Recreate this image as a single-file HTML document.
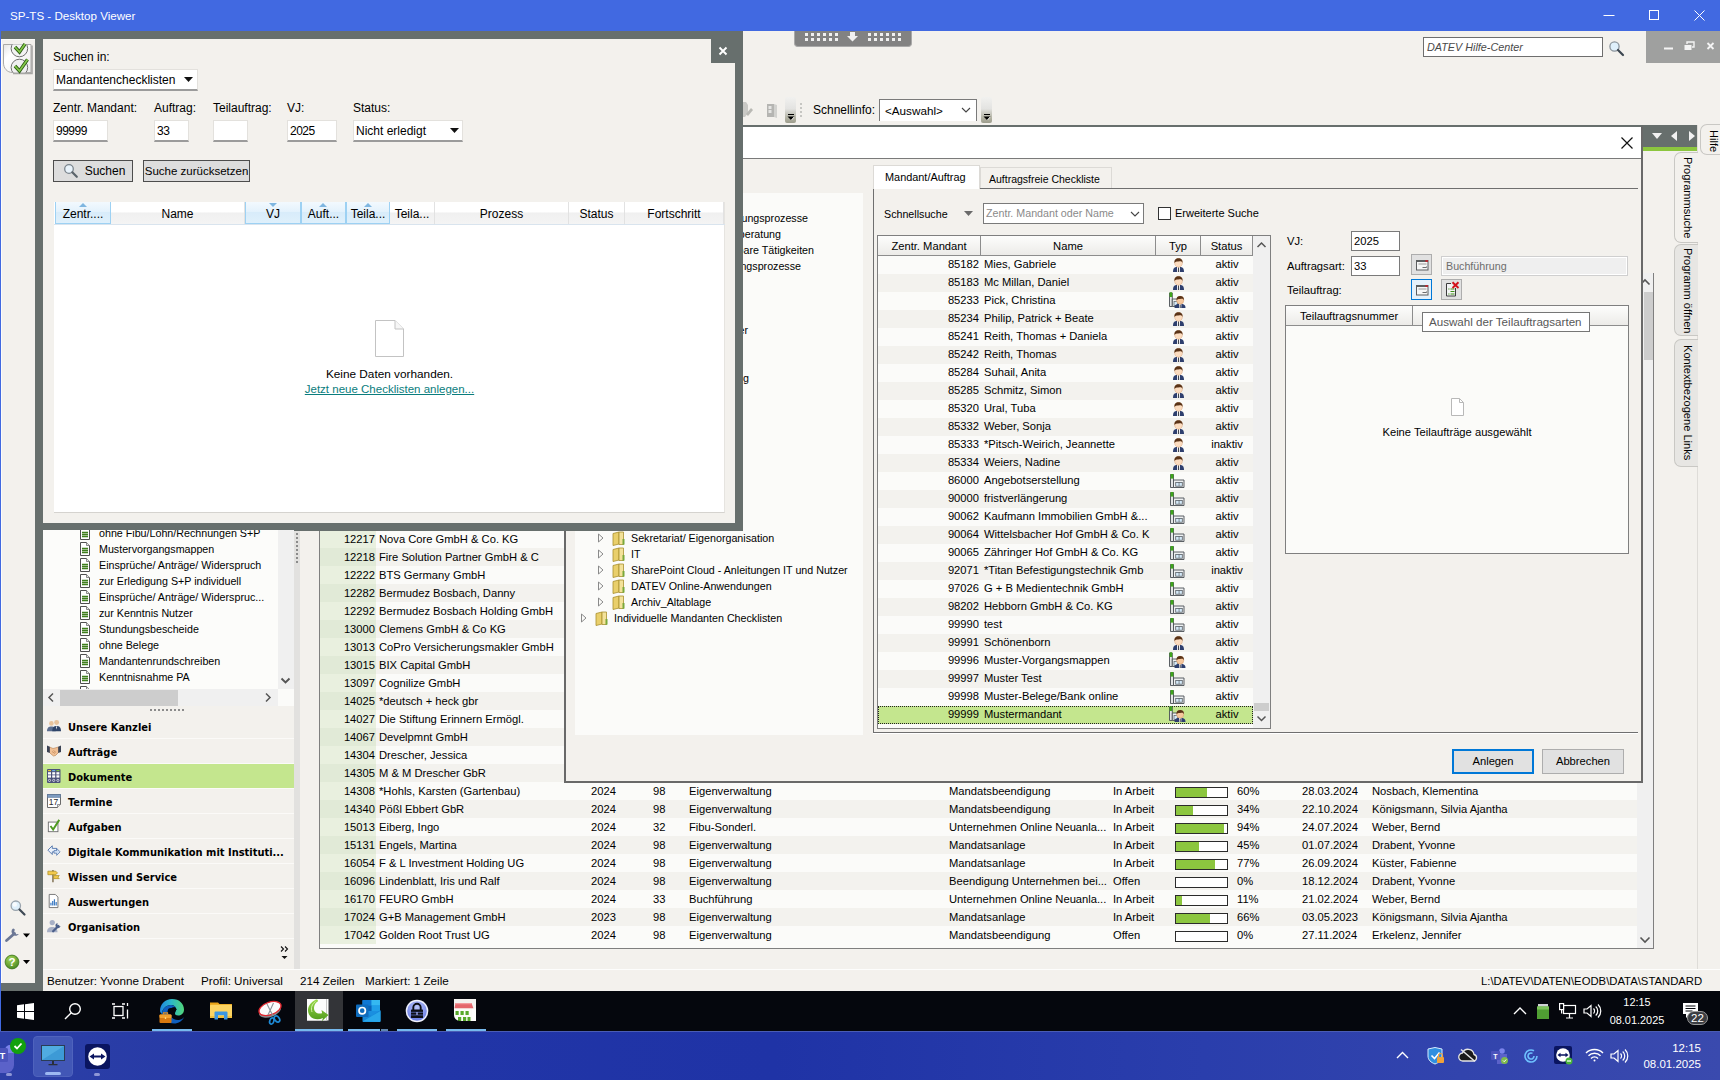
<!DOCTYPE html>
<html lang="de"><head><meta charset="utf-8"><title>SP-TS - Desktop Viewer</title>
<style>
*{box-sizing:border-box;margin:0;padding:0}
html,body{width:1720px;height:1080px;overflow:hidden;background:#f3f1ed}
body{position:relative;font-family:"Liberation Sans",sans-serif;font-size:12px;color:#000;line-height:1}
.a{position:absolute}
.t{position:absolute;white-space:pre;line-height:16px;height:16px}
.ms{font-size:11.2px}
.dk{background:#676f6d}
svg{position:absolute;overflow:visible}
/* title bar */
#tb{left:0;top:0;width:1720px;height:31px;background:#4169e1}
/* search panel */
.inp{position:absolute;background:#fff;border:1px solid #e3e1dd;border-bottom:2px solid #9b9b9b;height:22px;font-size:12px;line-height:20px;padding-left:2px;white-space:pre}
.btn{position:absolute;background:#dddddd;border:1px solid #4d4d4d;height:22px;line-height:21px;text-align:center;white-space:pre}
.hc{position:absolute;top:202px;height:22px;line-height:24px;text-align:center;white-space:pre;border-right:1px solid #e2e2e2;background:linear-gradient(#fff 0,#fff 45%,#f0f0f0 50%,#f4f4f4 100%);font-size:12px}
.hs{background:linear-gradient(#f2f9fe 0,#e4f2fc 45%,#d8ecfa 50%,#dff0fb 100%);border:1px solid #9dd1f3;border-top:0}
/* nav */
.nv{position:absolute;left:43px;width:251px;height:25px;border-bottom:1px solid #fbfaf8;font-family:"DejaVu Sans Condensed","DejaVu Sans","Liberation Sans",sans-serif;font-weight:700;font-size:11px;line-height:28px;padding-left:25px;white-space:pre}
/* tree */
.tr{position:absolute;left:99px;font-size:10.7px;line-height:16px;height:16px;white-space:pre}
/* bg table */
.r{position:absolute;left:320px;width:1317px;height:18px;font-size:11.2px;line-height:18px;white-space:pre}
.r span{position:absolute;top:0;line-height:18px}
.r0{background:#fbfbf9}.r1{background:#f3f2ee}
.g0{background:#e9f0df}.g1{background:#e1ead7}
.r .pb{position:absolute;left:855px;top:5px;width:53px;height:11px;border:1px solid #2b2b2b;background:#fff}
.pb i{position:absolute;left:0;top:0;height:9px;background:#8cc63f}
/* dialog grid */
.d{position:absolute;left:878px;width:375px;height:18px;font-size:11.2px;line-height:18px;white-space:pre}
.d span{position:absolute;top:0;line-height:16px}
</style></head>
<body>
<div class="a" id="tb"></div>
<div class="t" style="left:10px;top:8px;color:#fff;font-size:11.6px">SP-TS - Desktop Viewer</div>
<svg style="left:1590px;top:0" width="130" height="31" viewBox="0 0 130 31" fill="none" stroke="#fff" stroke-width="1">
<path d="M13.5 15.5h11"/><rect x="59.5" y="10.5" width="9" height="9"/><path d="M104.5 10.5l10 10M114.5 10.5l-10 10"/></svg>
<div class="a" style="left:0;top:31px;width:1px;height:1000px;background:#4169e1"></div>
<div class="a" style="left:794px;top:31px;width:118px;height:16px;background:#828282;border:1px solid #a9a9a9;border-top:0;border-radius:0 0 4px 4px"></div>
<svg style="left:794px;top:31px" width="118" height="16" fill="#f0f0f0"><rect x="11" y="2" width="3" height="3"/><rect x="11" y="7" width="3" height="3"/><rect x="17" y="2" width="3" height="3"/><rect x="17" y="7" width="3" height="3"/><rect x="23" y="2" width="3" height="3"/><rect x="23" y="7" width="3" height="3"/><rect x="29" y="2" width="3" height="3"/><rect x="29" y="7" width="3" height="3"/><rect x="35" y="2" width="3" height="3"/><rect x="35" y="7" width="3" height="3"/><rect x="41" y="2" width="3" height="3"/><rect x="41" y="7" width="3" height="3"/><rect x="74" y="2" width="3" height="3"/><rect x="74" y="7" width="3" height="3"/><rect x="80" y="2" width="3" height="3"/><rect x="80" y="7" width="3" height="3"/><rect x="86" y="2" width="3" height="3"/><rect x="86" y="7" width="3" height="3"/><rect x="92" y="2" width="3" height="3"/><rect x="92" y="7" width="3" height="3"/><rect x="98" y="2" width="3" height="3"/><rect x="98" y="7" width="3" height="3"/><rect x="104" y="2" width="3" height="3"/><rect x="104" y="7" width="3" height="3"/><path d="M56 1h5v4h3l-5.5 5.5L53 5h3z"/></svg>
<div class="a" style="left:1423px;top:37px;width:180px;height:20px;background:#fff;border:1px solid #6e6e6e"></div>
<div class="t" style="left:1427px;top:39px;font-style:italic;color:#4a4a4a;font-size:10.8px">DATEV Hilfe-Center</div>
<svg style="left:1608px;top:40px" width="18" height="18" viewBox="0 0 18 18"><circle cx="6.5" cy="6.5" r="4.6" fill="#dff0fb" stroke="#8a949c" stroke-width="1.3"/><path d="M10 10l5 5" stroke="#3c4650" stroke-width="2.2" stroke-linecap="round"/></svg>
<div class="a" style="left:1646px;top:31px;width:74px;height:32px;background:#9fa09f"></div>
<svg style="left:1646px;top:31px" width="74" height="32" viewBox="0 0 74 32" fill="none" stroke="#f4f4f4">
<path d="M18 17.5h9" stroke-width="2"/><rect x="38.5" y="14" width="7" height="5" fill="#f4f4f4" stroke="none"/><path d="M41 13v-2h7v5h-2" stroke-width="1.4"/><path d="M61.5 12l6 6M67.500 12l-6 6" stroke-width="1.8"/></svg>
<svg style="left:743px;top:98px" width="60" height="26" viewBox="0 0 60 26">
<path d="M0 4h3l2 3v8l-3 4H0z" fill="#c9c9c5"/><path d="M3 16l5-6 2 2-5 6z" fill="#b9b9b4"/>
<rect x="24" y="6" width="7" height="13" fill="#b5b5b2"/><path d="M31 6l3 1v13l-3-1z" fill="#d2d2cf"/><rect x="25.500" y="8" width="3" height="3" fill="#e6e6e4"/><rect x="25.500" y="12" width="3" height="3" fill="#e6e6e4"/>
</svg>
<div class="a" style="left:785px;top:97px;width:11px;height:26px;border-radius:2px;background:linear-gradient(#f1f1ef 0,#e3e3e1 45%,#b3b3a4 80%,#9c9c8c 100%)"></div>
<svg style="left:785px;top:97px" width="11" height="26"><path d="M3 17.500h6" stroke="#000" stroke-width="1"/><path d="M2.500 19.500h7l-3.500 3.500z" fill="#000"/><path d="M9 20l-2.500 3" stroke="#fff" stroke-width=".8"/></svg>
<div class="a" style="left:981px;top:97px;width:11px;height:26px;border-radius:2px;background:linear-gradient(#f1f1ef 0,#e3e3e1 45%,#b3b3a4 80%,#9c9c8c 100%)"></div>
<svg style="left:981px;top:97px" width="11" height="26"><path d="M3 17.500h6" stroke="#000" stroke-width="1"/><path d="M2.500 19.500h7l-3.500 3.500z" fill="#000"/><path d="M9 20l-2.500 3" stroke="#fff" stroke-width=".8"/></svg>
<div class="a" style="left:800px;top:103px;width:2px;height:15px;background:repeating-linear-gradient(#c6c6c2 0 2px,transparent 2px 4px)"></div>
<div class="t" style="left:813px;top:102px;font-size:12px">Schnellinfo:</div>
<div class="a" style="left:879px;top:99px;width:98px;height:22px;background:#fff;border:1px solid #7a7a7a;border-bottom:0"></div>
<div class="t" style="left:885px;top:103px;font-size:11.7px">&lt;Auswahl&gt;</div>
<svg style="left:961px;top:107px" width="10" height="7" fill="none" stroke="#444" stroke-width="1.1"><path d="M1 1l4 4 4-4"/></svg>
<div class="a dk" style="left:743px;top:125px;width:954px;height:22px"></div>
<div class="a" style="left:743px;top:147px;width:954px;height:4px;background:#8cc63f"></div>
<svg style="left:1643px;top:125px" width="54" height="22" fill="#f1f1f1"><path d="M9 8h10l-5 6z"/><path d="M34 6v10l-6-5z"/><path d="M46 6v10l6-5z"/></svg>
<div class="a" style="left:1697px;top:125px;width:1px;height:844px;background:#dedcd8"></div>
<div class="a" style="left:1700px;top:124px;width:22px;height:31px;background:#f3f1ed;border:1px solid #c9c8c4;border-right:0;border-radius:7px 0 0 7px"></div>
<div class="a" style="left:1700px;top:126px;width:22px;height:31px;writing-mode:vertical-rl;text-align:center;line-height:16px;font-size:11.1px;white-space:pre">Hilfe</div>
<div class="a" style="left:1674px;top:152px;width:24px;height:91px;background:#f3f1ed;border:1px solid #c9c8c4;border-right:0;border-radius:7px 0 0 7px"></div>
<div class="a" style="left:1674px;top:152px;width:24px;height:91px;writing-mode:vertical-rl;text-align:center;line-height:20px;font-size:11.1px;white-space:pre">Programmsuche</div>
<div class="a" style="left:1674px;top:244px;width:24px;height:92px;background:#e7e6e3;border:1px solid #c9c8c4;border-right:0;border-radius:7px 0 0 7px"></div>
<div class="a" style="left:1674px;top:245px;width:24px;height:92px;writing-mode:vertical-rl;text-align:center;line-height:20px;font-size:11.1px;white-space:pre">Programm öffnen</div>
<div class="a" style="left:1674px;top:339px;width:24px;height:128px;background:#e7e6e3;border:1px solid #c9c8c4;border-right:0;border-radius:7px 0 0 7px"></div>
<div class="a" style="left:1674px;top:339px;width:24px;height:128px;writing-mode:vertical-rl;text-align:center;line-height:20px;font-size:11.1px;white-space:pre">Kontextbezogene Links</div>
<div class="a" style="left:294px;top:530px;width:6px;height:439px;background:#e2e1df"></div>
<div class="a" style="left:296px;top:533px;width:2px;height:30px;background:repeating-linear-gradient(#8b8b8b 0 2px,transparent 2px 4px)"></div>
<div class="a" style="left:319px;top:273px;width:1335px;height:676px;border:1px solid #7f7f7f;background:#fbfbf9"></div>
<div class="r r0" style="top:530px"><span class="g0" style="left:0;width:56px;height:18px"></span><span style="left:0;width:55px;text-align:right">12217</span><span style="left:59px">Nova Core GmbH &amp; Co. KG</span></div>
<div class="r r1" style="top:548px"><span class="g1" style="left:0;width:56px;height:18px"></span><span style="left:0;width:55px;text-align:right">12218</span><span style="left:59px">Fire Solution Partner GmbH &amp; C</span></div>
<div class="r r0" style="top:566px"><span class="g0" style="left:0;width:56px;height:18px"></span><span style="left:0;width:55px;text-align:right">12222</span><span style="left:59px">BTS Germany GmbH</span></div>
<div class="r r1" style="top:584px"><span class="g1" style="left:0;width:56px;height:18px"></span><span style="left:0;width:55px;text-align:right">12282</span><span style="left:59px">Bermudez Bosbach, Danny</span></div>
<div class="r r0" style="top:602px"><span class="g0" style="left:0;width:56px;height:18px"></span><span style="left:0;width:55px;text-align:right">12292</span><span style="left:59px">Bermudez Bosbach Holding GmbH</span></div>
<div class="r r1" style="top:620px"><span class="g1" style="left:0;width:56px;height:18px"></span><span style="left:0;width:55px;text-align:right">13000</span><span style="left:59px">Clemens GmbH &amp; Co KG</span></div>
<div class="r r0" style="top:638px"><span class="g0" style="left:0;width:56px;height:18px"></span><span style="left:0;width:55px;text-align:right">13013</span><span style="left:59px">CoPro Versicherungsmakler GmbH</span></div>
<div class="r r1" style="top:656px"><span class="g1" style="left:0;width:56px;height:18px"></span><span style="left:0;width:55px;text-align:right">13015</span><span style="left:59px">BIX Capital GmbH</span></div>
<div class="r r0" style="top:674px"><span class="g0" style="left:0;width:56px;height:18px"></span><span style="left:0;width:55px;text-align:right">13097</span><span style="left:59px">Cognilize GmbH</span></div>
<div class="r r1" style="top:692px"><span class="g1" style="left:0;width:56px;height:18px"></span><span style="left:0;width:55px;text-align:right">14025</span><span style="left:59px">*deutsch + heck gbr</span></div>
<div class="r r0" style="top:710px"><span class="g0" style="left:0;width:56px;height:18px"></span><span style="left:0;width:55px;text-align:right">14027</span><span style="left:59px">Die Stiftung Erinnern Ermögl.</span></div>
<div class="r r1" style="top:728px"><span class="g1" style="left:0;width:56px;height:18px"></span><span style="left:0;width:55px;text-align:right">14067</span><span style="left:59px">Develpmnt GmbH</span></div>
<div class="r r0" style="top:746px"><span class="g0" style="left:0;width:56px;height:18px"></span><span style="left:0;width:55px;text-align:right">14304</span><span style="left:59px">Drescher, Jessica</span></div>
<div class="r r1" style="top:764px"><span class="g1" style="left:0;width:56px;height:18px"></span><span style="left:0;width:55px;text-align:right">14305</span><span style="left:59px">M &amp; M Drescher GbR</span></div>
<div class="r r0" style="top:782px"><span class="g0" style="left:0;width:56px;height:18px"></span><span style="left:0;width:55px;text-align:right">14308</span><span style="left:59px">*Hohls, Karsten (Gartenbau)</span><span style="left:271px">2024</span><span style="left:333px">98</span><span style="left:369px">Eigenverwaltung</span><span style="left:629px">Mandatsbeendigung</span><span style="left:793px">In Arbeit</span><span class="pb"><i style="width:31px"></i></span><span style="left:917px">60%</span><span style="left:982px">28.03.2024</span><span style="left:1052px">Nosbach, Klementina</span></div>
<div class="r r1" style="top:800px"><span class="g1" style="left:0;width:56px;height:18px"></span><span style="left:0;width:55px;text-align:right">14340</span><span style="left:59px">Pößl Ebbert GbR</span><span style="left:271px">2024</span><span style="left:333px">98</span><span style="left:369px">Eigenverwaltung</span><span style="left:629px">Mandatsbeendigung</span><span style="left:793px">In Arbeit</span><span class="pb"><i style="width:17px"></i></span><span style="left:917px">34%</span><span style="left:982px">22.10.2024</span><span style="left:1052px">Königsmann, Silvia Ajantha</span></div>
<div class="r r0" style="top:818px"><span class="g0" style="left:0;width:56px;height:18px"></span><span style="left:0;width:55px;text-align:right">15013</span><span style="left:59px">Eiberg, Ingo</span><span style="left:271px">2024</span><span style="left:333px">32</span><span style="left:369px">Fibu-Sonderl.</span><span style="left:629px">Unternehmen Online Neuanla...</span><span style="left:793px">In Arbeit</span><span class="pb"><i style="width:48px"></i></span><span style="left:917px">94%</span><span style="left:982px">24.07.2024</span><span style="left:1052px">Weber, Bernd</span></div>
<div class="r r1" style="top:836px"><span class="g1" style="left:0;width:56px;height:18px"></span><span style="left:0;width:55px;text-align:right">15131</span><span style="left:59px">Engels, Martina</span><span style="left:271px">2024</span><span style="left:333px">98</span><span style="left:369px">Eigenverwaltung</span><span style="left:629px">Mandatsanlage</span><span style="left:793px">In Arbeit</span><span class="pb"><i style="width:23px"></i></span><span style="left:917px">45%</span><span style="left:982px">01.07.2024</span><span style="left:1052px">Drabent, Yvonne</span></div>
<div class="r r0" style="top:854px"><span class="g0" style="left:0;width:56px;height:18px"></span><span style="left:0;width:55px;text-align:right">16054</span><span style="left:59px">F &amp; L Investment Holding UG</span><span style="left:271px">2024</span><span style="left:333px">98</span><span style="left:369px">Eigenverwaltung</span><span style="left:629px">Mandatsanlage</span><span style="left:793px">In Arbeit</span><span class="pb"><i style="width:39px"></i></span><span style="left:917px">77%</span><span style="left:982px">26.09.2024</span><span style="left:1052px">Küster, Fabienne</span></div>
<div class="r r1" style="top:872px"><span class="g1" style="left:0;width:56px;height:18px"></span><span style="left:0;width:55px;text-align:right">16096</span><span style="left:59px">Lindenblatt, Iris und Ralf</span><span style="left:271px">2024</span><span style="left:333px">98</span><span style="left:369px">Eigenverwaltung</span><span style="left:629px">Beendigung Unternehmen bei...</span><span style="left:793px">Offen</span><span class="pb"></span><span style="left:917px">0%</span><span style="left:982px">18.12.2024</span><span style="left:1052px">Drabent, Yvonne</span></div>
<div class="r r0" style="top:890px"><span class="g0" style="left:0;width:56px;height:18px"></span><span style="left:0;width:55px;text-align:right">16170</span><span style="left:59px">FEURO GmbH</span><span style="left:271px">2024</span><span style="left:333px">33</span><span style="left:369px">Buchführung</span><span style="left:629px">Unternehmen Online Neuanla...</span><span style="left:793px">In Arbeit</span><span class="pb"><i style="width:6px"></i></span><span style="left:917px">11%</span><span style="left:982px">21.02.2024</span><span style="left:1052px">Weber, Bernd</span></div>
<div class="r r1" style="top:908px"><span class="g1" style="left:0;width:56px;height:18px"></span><span style="left:0;width:55px;text-align:right">17024</span><span style="left:59px">G+B Management GmbH</span><span style="left:271px">2023</span><span style="left:333px">98</span><span style="left:369px">Eigenverwaltung</span><span style="left:629px">Mandatsanlage</span><span style="left:793px">In Arbeit</span><span class="pb"><i style="width:34px"></i></span><span style="left:917px">66%</span><span style="left:982px">03.05.2023</span><span style="left:1052px">Königsmann, Silvia Ajantha</span></div>
<div class="r r0" style="top:926px"><span class="g0" style="left:0;width:56px;height:18px"></span><span style="left:0;width:55px;text-align:right">17042</span><span style="left:59px">Golden Root Trust UG</span><span style="left:271px">2024</span><span style="left:333px">98</span><span style="left:369px">Eigenverwaltung</span><span style="left:629px">Mandatsbeendigung</span><span style="left:793px">Offen</span><span class="pb"></span><span style="left:917px">0%</span><span style="left:982px">27.11.2024</span><span style="left:1052px">Erkelenz, Jennifer</span></div>
<div class="a" style="left:1637px;top:273px;width:16px;height:675px;background:#f0f0f0"></div>
<div class="a" style="left:1644px;top:292px;width:9px;height:68px;background:#cdcdcd"></div>
<svg style="left:1639px;top:936px" width="12" height="8" fill="none" stroke="#555" stroke-width="1.6"><path d="M1.500 1.500l4.500 4.500 4.500-4.500"/></svg>
<svg style="left:1639px;top:278px" width="12" height="8" fill="none" stroke="#555" stroke-width="1.6"><path d="M1.500 6.500l4.500-4.500 4.500 4.500"/></svg>
<div class="a" style="left:43px;top:969px;width:1677px;height:1px;background:#fdfdfc"></div>
<div class="t" style="left:47px;top:973px;font-size:11.7px">Benutzer: Yvonne Drabent</div>
<div class="t" style="left:201px;top:973px;font-size:11.7px">Profil: Universal</div>
<div class="t" style="left:300px;top:973px;font-size:11.7px">214 Zeilen</div>
<div class="t" style="left:365px;top:973px;font-size:11.7px">Markiert: 1 Zeile</div>
<div class="t" style="left:1481px;top:973px;font-size:11.3px">L:\DATEV\DATEN\EODB\DATA\STANDARD</div>
<div class="a" style="left:564px;top:125px;width:1079px;height:658px;background:#f3f1ed;border:2px solid #696969;border-top-color:#676f6d"></div>
<div class="a" style="left:566px;top:127px;width:1075px;height:32px;background:#fff;border-bottom:1px solid #7a7a7a"></div>
<svg style="left:1620px;top:136px" width="14" height="14" fill="none" stroke="#111" stroke-width="1.2"><path d="M1.500 1.500l11 11M12.500 1.500l-11 11"/></svg>
<div class="a" style="left:575px;top:193px;width:288px;height:542px;background:#fbfbf9"></div>
<div class="t" style="font-size:10.7px;left:608px;width:200px;text-align:right;top:210px">Buchführungsprozesse</div>
<div class="t" style="font-size:10.7px;left:581px;width:200px;text-align:right;top:226px">Steuerberatung</div>
<div class="t" style="font-size:10.7px;left:614px;width:200px;text-align:right;top:242px">Vereinbare Tätigkeiten</div>
<div class="t" style="font-size:10.7px;left:601px;width:200px;text-align:right;top:258px">Beratungsprozesse</div>
<div class="t" style="font-size:10.7px;left:548px;width:200px;text-align:right;top:322px">Ordner</div>
<div class="t" style="font-size:10.7px;left:549px;width:200px;text-align:right;top:370px">Planung</div>
<svg style="left:597px;top:533px" width="8" height="10" fill="#fbfbf9" stroke="#8a8a8a" stroke-width="1"><path d="M1.500 1l4.500 4-4.500 4z"/></svg>
<svg style="left:612px;top:531px" width="14" height="15" viewBox="0 0 14 15"><path d="M1 2.500l6-1.500v12l-6 1.500z" fill="#e9cf6b" stroke="#a88f2e" stroke-width=".8"/><path d="M7 1h4.500v12.500H7z" fill="#f3e29a" stroke="#a88f2e" stroke-width=".8"/><path d="M10.500 8v6l2-.5V8z" fill="#7aa83a"/></svg>
<div class="t" style="font-size:10.7px;left:631px;top:530px">Sekretariat/ Eigenorganisation</div>
<svg style="left:597px;top:549px" width="8" height="10" fill="#fbfbf9" stroke="#8a8a8a" stroke-width="1"><path d="M1.500 1l4.500 4-4.500 4z"/></svg>
<svg style="left:612px;top:547px" width="14" height="15" viewBox="0 0 14 15"><path d="M1 2.500l6-1.500v12l-6 1.500z" fill="#e9cf6b" stroke="#a88f2e" stroke-width=".8"/><path d="M7 1h4.500v12.500H7z" fill="#f3e29a" stroke="#a88f2e" stroke-width=".8"/><path d="M10.500 8v6l2-.5V8z" fill="#7aa83a"/></svg>
<div class="t" style="font-size:10.7px;left:631px;top:546px">IT</div>
<svg style="left:597px;top:565px" width="8" height="10" fill="#fbfbf9" stroke="#8a8a8a" stroke-width="1"><path d="M1.500 1l4.500 4-4.500 4z"/></svg>
<svg style="left:612px;top:563px" width="14" height="15" viewBox="0 0 14 15"><path d="M1 2.500l6-1.500v12l-6 1.500z" fill="#e9cf6b" stroke="#a88f2e" stroke-width=".8"/><path d="M7 1h4.500v12.500H7z" fill="#f3e29a" stroke="#a88f2e" stroke-width=".8"/><path d="M10.500 8v6l2-.5V8z" fill="#7aa83a"/></svg>
<div class="t" style="font-size:10.7px;left:631px;top:562px">SharePoint Cloud - Anleitungen IT und Nutzer</div>
<svg style="left:597px;top:581px" width="8" height="10" fill="#fbfbf9" stroke="#8a8a8a" stroke-width="1"><path d="M1.500 1l4.500 4-4.500 4z"/></svg>
<svg style="left:612px;top:579px" width="14" height="15" viewBox="0 0 14 15"><path d="M1 2.500l6-1.500v12l-6 1.500z" fill="#e9cf6b" stroke="#a88f2e" stroke-width=".8"/><path d="M7 1h4.500v12.500H7z" fill="#f3e29a" stroke="#a88f2e" stroke-width=".8"/><path d="M10.500 8v6l2-.5V8z" fill="#7aa83a"/></svg>
<div class="t" style="font-size:10.7px;left:631px;top:578px">DATEV Online-Anwendungen</div>
<svg style="left:597px;top:597px" width="8" height="10" fill="#fbfbf9" stroke="#8a8a8a" stroke-width="1"><path d="M1.500 1l4.500 4-4.500 4z"/></svg>
<svg style="left:612px;top:595px" width="14" height="15" viewBox="0 0 14 15"><path d="M1 2.500l6-1.500v12l-6 1.500z" fill="#e9cf6b" stroke="#a88f2e" stroke-width=".8"/><path d="M7 1h4.500v12.500H7z" fill="#f3e29a" stroke="#a88f2e" stroke-width=".8"/><path d="M10.500 8v6l2-.5V8z" fill="#7aa83a"/></svg>
<div class="t" style="font-size:10.7px;left:631px;top:594px">Archiv_Altablage</div>
<svg style="left:580px;top:613px" width="8" height="10" fill="#fbfbf9" stroke="#8a8a8a" stroke-width="1"><path d="M1.500 1l4.500 4-4.500 4z"/></svg>
<svg style="left:595px;top:611px" width="14" height="15" viewBox="0 0 14 15"><path d="M1 2.500l6-1.500v12l-6 1.500z" fill="#e9cf6b" stroke="#a88f2e" stroke-width=".8"/><path d="M7 1h4.500v12.500H7z" fill="#f3e29a" stroke="#a88f2e" stroke-width=".8"/><path d="M10.500 8v6l2-.5V8z" fill="#7aa83a"/></svg>
<div class="t" style="font-size:10.7px;left:614px;top:610px">Individuelle Mandanten Checklisten</div>
<div class="a" style="left:873px;top:188px;width:765px;height:545px;border:1px solid #6f6f6f;border-right:0;border-bottom-color:#6f6f6f"></div>
<div class="a" style="left:873px;top:165px;width:107px;height:24px;background:#fff;border:1px solid #dcdad6;border-bottom:0"></div>
<div class="a" style="left:980px;top:167px;width:132px;height:21px;background:#f3f1ed;border:1px solid #dcdad6;border-bottom:0"></div>
<div class="t" style="left:885px;top:169px;font-size:10.9px">Mandant/Auftrag</div>
<div class="t" style="left:989px;top:171px;font-size:10.5px">Auftragsfreie Checkliste</div>
<div class="t" style="left:884px;top:206px;font-size:10.7px">Schnellsuche</div>
<svg style="left:964px;top:211px" width="9" height="5"><path d="M0 0h9l-4.500 5z" fill="#6a6a6a"/></svg>
<div class="a" style="left:983px;top:203px;width:161px;height:21px;background:#fff;border:1px solid #7a7a7a"></div>
<div class="t" style="left:986px;top:205px;color:#8a8a8a;font-size:10.7px">Zentr. Mandant oder Name</div>
<svg style="left:1130px;top:211px" width="10" height="7" fill="none" stroke="#444" stroke-width="1.1"><path d="M1 1l4 4 4-4"/></svg>
<div class="a" style="left:1158px;top:207px;width:13px;height:13px;background:#fff;border:1px solid #333"></div>
<div class="t" style="left:1175px;top:205px;font-size:11px">Erweiterte Suche</div>
<div class="a" style="left:877px;top:235px;width:394px;height:494px;border:1px solid #7f7f7f;background:#fbfbf9"></div>
<div class="a ms" style="left:878px;top:236px;width:103px;height:20px;line-height:20px;text-align:center;white-space:pre;background:linear-gradient(#fdfdfc,#ecebe8);border-right:1px solid #8d8d8d;border-bottom:1px solid #8d8d8d">Zentr. Mandant</div>
<div class="a ms" style="left:981px;top:236px;width:175px;height:20px;line-height:20px;text-align:center;white-space:pre;background:linear-gradient(#fdfdfc,#ecebe8);border-right:1px solid #8d8d8d;border-bottom:1px solid #8d8d8d">Name</div>
<div class="a ms" style="left:1156px;top:236px;width:45px;height:20px;line-height:20px;text-align:center;white-space:pre;background:linear-gradient(#fdfdfc,#ecebe8);border-right:1px solid #8d8d8d;border-bottom:1px solid #8d8d8d">Typ</div>
<div class="a ms" style="left:1201px;top:236px;width:52px;height:20px;line-height:20px;text-align:center;white-space:pre;background:linear-gradient(#fdfdfc,#ecebe8);border-right:1px solid #8d8d8d;border-bottom:1px solid #8d8d8d">Status</div>
<div class="a" style="left:1253px;top:236px;width:17px;height:492px;background:#f0f0f0"></div>
<div class="a" style="left:1254px;top:703px;width:15px;height:8px;background:#cdcdcd"></div>
<svg style="left:1256px;top:241px" width="11" height="8" fill="none" stroke="#555" stroke-width="1.5"><path d="M1.500 6l4-4 4 4"/></svg>
<svg style="left:1256px;top:715px" width="11" height="8" fill="none" stroke="#555" stroke-width="1.5"><path d="M1.500 1.500l4 4 4-4"/></svg>
<div class="d" style="top:256px;background:#fbfbf9"><span style="left:0;width:101px;text-align:right">85182</span><span style="left:106px">Mies, Gabriele</span><svg style="left:295px;top:2px" width="11" height="14" viewBox="0 0 11 14"><path d="M0 14c0-3 .8-4.600 3.200-5h4.600c2.400.4 3.200 2 3.200 5z" fill="#2e3f6e"/><path d="M4 8.800h3l-.2 5.200H4.200z" fill="#fff"/><path d="M5.100 9.300h.8V14h-.8z" fill="#15171f"/><ellipse cx="5.500" cy="4.800" rx="3.900" ry="4.400" fill="#fbdcc0" stroke="#dba67c" stroke-width=".5"/><path d="M1.500 5C1 1.800 2.900.2 5.500.2S10 1.800 9.500 5C9 3.600 8.200 3 6.600 3.300 4.600 3.700 2.700 3.200 1.500 5z" fill="#5a3317"/></svg><span style="left:323px;width:52px;text-align:center">aktiv</span></div>
<div class="d" style="top:274px;background:#f3f2ee"><span style="left:0;width:101px;text-align:right">85183</span><span style="left:106px">Mc Millan, Daniel</span><svg style="left:295px;top:2px" width="11" height="14" viewBox="0 0 11 14"><path d="M0 14c0-3 .8-4.600 3.200-5h4.600c2.400.4 3.200 2 3.200 5z" fill="#2e3f6e"/><path d="M4 8.800h3l-.2 5.200H4.200z" fill="#fff"/><path d="M5.100 9.300h.8V14h-.8z" fill="#15171f"/><ellipse cx="5.500" cy="4.800" rx="3.900" ry="4.400" fill="#fbdcc0" stroke="#dba67c" stroke-width=".5"/><path d="M1.500 5C1 1.800 2.900.2 5.500.2S10 1.800 9.500 5C9 3.600 8.200 3 6.600 3.300 4.600 3.700 2.700 3.200 1.500 5z" fill="#5a3317"/></svg><span style="left:323px;width:52px;text-align:center">aktiv</span></div>
<div class="d" style="top:292px;background:#fbfbf9"><span style="left:0;width:101px;text-align:right">85233</span><span style="left:106px">Pick, Christina</span><svg style="left:291px;top:0px" width="17" height="16" viewBox="0 0 17 16"><path d="M.5 1h2.800v13.500H.5z" fill="#e4e6e7" stroke="#4a4f55" stroke-width=".9"/><rect x=".6" y=".3" width="2.600" height="4.700" fill="#3fa51c"/><path d="M3.300 7h6v7.500h-6z" fill="#eef0f1" stroke="#4a4f55" stroke-width=".9"/><rect x="5" y="9.500" width="3.500" height="4" fill="#d4e9f8" stroke="#5a6066" stroke-width=".7"/><path d="M5.500 16c0-2.400 1-3.600 3-3.900h5c2 .3 3 1.500 3 3.900z" fill="#2e3f6e"/><path d="M10 12h2.400l-.2 4h-2z" fill="#fff"/><path d="M10.800 12.500h.8V16h-.8z" fill="#15171f"/><ellipse cx="11.200" cy="8.200" rx="3.600" ry="3.900" fill="#f6c79e" stroke="#d39a6c" stroke-width=".5"/><path d="M7.500 8.300C7.100 5.400 8.800 4 11.200 4s4.100 1.400 3.700 4.300c-.5-1.300-1.200-1.800-2.600-1.500-1.900.3-3.700-.1-4.800 1.500z" fill="#5a3317"/></svg><span style="left:323px;width:52px;text-align:center">aktiv</span></div>
<div class="d" style="top:310px;background:#f3f2ee"><span style="left:0;width:101px;text-align:right">85234</span><span style="left:106px">Philip, Patrick + Beate</span><svg style="left:295px;top:2px" width="11" height="14" viewBox="0 0 11 14"><path d="M0 14c0-3 .8-4.600 3.200-5h4.600c2.400.4 3.200 2 3.200 5z" fill="#2e3f6e"/><path d="M4 8.800h3l-.2 5.200H4.200z" fill="#fff"/><path d="M5.100 9.300h.8V14h-.8z" fill="#15171f"/><ellipse cx="5.500" cy="4.800" rx="3.900" ry="4.400" fill="#fbdcc0" stroke="#dba67c" stroke-width=".5"/><path d="M1.500 5C1 1.800 2.900.2 5.500.2S10 1.800 9.500 5C9 3.600 8.200 3 6.600 3.300 4.600 3.700 2.700 3.200 1.500 5z" fill="#5a3317"/></svg><span style="left:323px;width:52px;text-align:center">aktiv</span></div>
<div class="d" style="top:328px;background:#fbfbf9"><span style="left:0;width:101px;text-align:right">85241</span><span style="left:106px">Reith, Thomas + Daniela</span><svg style="left:295px;top:2px" width="11" height="14" viewBox="0 0 11 14"><path d="M0 14c0-3 .8-4.600 3.200-5h4.600c2.400.4 3.200 2 3.200 5z" fill="#2e3f6e"/><path d="M4 8.800h3l-.2 5.200H4.200z" fill="#fff"/><path d="M5.100 9.300h.8V14h-.8z" fill="#15171f"/><ellipse cx="5.500" cy="4.800" rx="3.900" ry="4.400" fill="#fbdcc0" stroke="#dba67c" stroke-width=".5"/><path d="M1.500 5C1 1.800 2.900.2 5.500.2S10 1.800 9.500 5C9 3.600 8.200 3 6.600 3.300 4.600 3.700 2.700 3.200 1.500 5z" fill="#5a3317"/></svg><span style="left:323px;width:52px;text-align:center">aktiv</span></div>
<div class="d" style="top:346px;background:#f3f2ee"><span style="left:0;width:101px;text-align:right">85242</span><span style="left:106px">Reith, Thomas</span><svg style="left:295px;top:2px" width="11" height="14" viewBox="0 0 11 14"><path d="M0 14c0-3 .8-4.600 3.200-5h4.600c2.400.4 3.200 2 3.200 5z" fill="#2e3f6e"/><path d="M4 8.800h3l-.2 5.200H4.200z" fill="#fff"/><path d="M5.100 9.300h.8V14h-.8z" fill="#15171f"/><ellipse cx="5.500" cy="4.800" rx="3.900" ry="4.400" fill="#fbdcc0" stroke="#dba67c" stroke-width=".5"/><path d="M1.500 5C1 1.800 2.900.2 5.500.2S10 1.800 9.500 5C9 3.600 8.200 3 6.600 3.300 4.600 3.700 2.700 3.200 1.500 5z" fill="#5a3317"/></svg><span style="left:323px;width:52px;text-align:center">aktiv</span></div>
<div class="d" style="top:364px;background:#fbfbf9"><span style="left:0;width:101px;text-align:right">85284</span><span style="left:106px">Suhail, Anita</span><svg style="left:295px;top:2px" width="11" height="14" viewBox="0 0 11 14"><path d="M0 14c0-3 .8-4.600 3.200-5h4.600c2.400.4 3.200 2 3.200 5z" fill="#2e3f6e"/><path d="M4 8.800h3l-.2 5.200H4.200z" fill="#fff"/><path d="M5.100 9.300h.8V14h-.8z" fill="#15171f"/><ellipse cx="5.500" cy="4.800" rx="3.900" ry="4.400" fill="#fbdcc0" stroke="#dba67c" stroke-width=".5"/><path d="M1.500 5C1 1.800 2.900.2 5.500.2S10 1.800 9.500 5C9 3.600 8.200 3 6.600 3.300 4.600 3.700 2.700 3.200 1.500 5z" fill="#5a3317"/></svg><span style="left:323px;width:52px;text-align:center">aktiv</span></div>
<div class="d" style="top:382px;background:#f3f2ee"><span style="left:0;width:101px;text-align:right">85285</span><span style="left:106px">Schmitz, Simon</span><svg style="left:295px;top:2px" width="11" height="14" viewBox="0 0 11 14"><path d="M0 14c0-3 .8-4.600 3.200-5h4.600c2.400.4 3.200 2 3.200 5z" fill="#2e3f6e"/><path d="M4 8.800h3l-.2 5.200H4.200z" fill="#fff"/><path d="M5.100 9.300h.8V14h-.8z" fill="#15171f"/><ellipse cx="5.500" cy="4.800" rx="3.900" ry="4.400" fill="#fbdcc0" stroke="#dba67c" stroke-width=".5"/><path d="M1.500 5C1 1.800 2.900.2 5.500.2S10 1.800 9.500 5C9 3.600 8.200 3 6.600 3.300 4.600 3.700 2.700 3.200 1.500 5z" fill="#5a3317"/></svg><span style="left:323px;width:52px;text-align:center">aktiv</span></div>
<div class="d" style="top:400px;background:#fbfbf9"><span style="left:0;width:101px;text-align:right">85320</span><span style="left:106px">Ural, Tuba</span><svg style="left:295px;top:2px" width="11" height="14" viewBox="0 0 11 14"><path d="M0 14c0-3 .8-4.600 3.200-5h4.600c2.400.4 3.200 2 3.200 5z" fill="#2e3f6e"/><path d="M4 8.800h3l-.2 5.200H4.200z" fill="#fff"/><path d="M5.100 9.300h.8V14h-.8z" fill="#15171f"/><ellipse cx="5.500" cy="4.800" rx="3.900" ry="4.400" fill="#fbdcc0" stroke="#dba67c" stroke-width=".5"/><path d="M1.500 5C1 1.800 2.900.2 5.500.2S10 1.800 9.500 5C9 3.600 8.200 3 6.600 3.300 4.600 3.700 2.700 3.200 1.500 5z" fill="#5a3317"/></svg><span style="left:323px;width:52px;text-align:center">aktiv</span></div>
<div class="d" style="top:418px;background:#f3f2ee"><span style="left:0;width:101px;text-align:right">85332</span><span style="left:106px">Weber, Sonja</span><svg style="left:295px;top:2px" width="11" height="14" viewBox="0 0 11 14"><path d="M0 14c0-3 .8-4.600 3.200-5h4.600c2.400.4 3.200 2 3.200 5z" fill="#2e3f6e"/><path d="M4 8.800h3l-.2 5.200H4.200z" fill="#fff"/><path d="M5.100 9.300h.8V14h-.8z" fill="#15171f"/><ellipse cx="5.500" cy="4.800" rx="3.900" ry="4.400" fill="#fbdcc0" stroke="#dba67c" stroke-width=".5"/><path d="M1.500 5C1 1.800 2.900.2 5.500.2S10 1.800 9.500 5C9 3.600 8.200 3 6.600 3.300 4.600 3.700 2.700 3.200 1.500 5z" fill="#5a3317"/></svg><span style="left:323px;width:52px;text-align:center">aktiv</span></div>
<div class="d" style="top:436px;background:#fbfbf9"><span style="left:0;width:101px;text-align:right">85333</span><span style="left:106px">*Pitsch-Weirich, Jeannette</span><svg style="left:295px;top:2px" width="11" height="14" viewBox="0 0 11 14"><path d="M0 14c0-3 .8-4.600 3.200-5h4.600c2.400.4 3.200 2 3.200 5z" fill="#2e3f6e"/><path d="M4 8.800h3l-.2 5.200H4.200z" fill="#fff"/><path d="M5.100 9.300h.8V14h-.8z" fill="#15171f"/><ellipse cx="5.500" cy="4.800" rx="3.900" ry="4.400" fill="#fbdcc0" stroke="#dba67c" stroke-width=".5"/><path d="M1.500 5C1 1.800 2.900.2 5.500.2S10 1.800 9.500 5C9 3.600 8.200 3 6.600 3.300 4.600 3.700 2.700 3.200 1.500 5z" fill="#5a3317"/></svg><span style="left:323px;width:52px;text-align:center">inaktiv</span></div>
<div class="d" style="top:454px;background:#f3f2ee"><span style="left:0;width:101px;text-align:right">85334</span><span style="left:106px">Weiers, Nadine</span><svg style="left:295px;top:2px" width="11" height="14" viewBox="0 0 11 14"><path d="M0 14c0-3 .8-4.600 3.200-5h4.600c2.400.4 3.200 2 3.200 5z" fill="#2e3f6e"/><path d="M4 8.800h3l-.2 5.200H4.200z" fill="#fff"/><path d="M5.100 9.300h.8V14h-.8z" fill="#15171f"/><ellipse cx="5.500" cy="4.800" rx="3.900" ry="4.400" fill="#fbdcc0" stroke="#dba67c" stroke-width=".5"/><path d="M1.500 5C1 1.800 2.900.2 5.500.2S10 1.800 9.500 5C9 3.600 8.200 3 6.600 3.300 4.600 3.700 2.700 3.200 1.500 5z" fill="#5a3317"/></svg><span style="left:323px;width:52px;text-align:center">aktiv</span></div>
<div class="d" style="top:472px;background:#fbfbf9"><span style="left:0;width:101px;text-align:right">86000</span><span style="left:106px">Angebotserstellung</span><svg style="left:292px;top:2px" width="15" height="14" viewBox="0 0 15 14"><path d="M.5 .5h3v13h-3z" fill="#e4e6e7" stroke="#4a4f55" stroke-width=".9"/><rect x=".6" y="0" width="2.800" height="4.600" fill="#3fa51c"/><path d="M3.500 6h10.500v7.500H3.500z" fill="#eef0f1" stroke="#4a4f55" stroke-width=".9"/><rect x="5.300" y="8" width="7.400" height="4.600" fill="#5a6066"/><rect x="6.100" y="8.800" width="2.600" height="3" fill="#d4e9f8"/><rect x="9.400" y="8.800" width="2.500" height="3" fill="#d4e9f8"/></svg><span style="left:323px;width:52px;text-align:center">aktiv</span></div>
<div class="d" style="top:490px;background:#f3f2ee"><span style="left:0;width:101px;text-align:right">90000</span><span style="left:106px">fristverlängerung</span><svg style="left:292px;top:2px" width="15" height="14" viewBox="0 0 15 14"><path d="M.5 .5h3v13h-3z" fill="#e4e6e7" stroke="#4a4f55" stroke-width=".9"/><rect x=".6" y="0" width="2.800" height="4.600" fill="#3fa51c"/><path d="M3.500 6h10.500v7.500H3.500z" fill="#eef0f1" stroke="#4a4f55" stroke-width=".9"/><rect x="5.300" y="8" width="7.400" height="4.600" fill="#5a6066"/><rect x="6.100" y="8.800" width="2.600" height="3" fill="#d4e9f8"/><rect x="9.400" y="8.800" width="2.500" height="3" fill="#d4e9f8"/></svg><span style="left:323px;width:52px;text-align:center">aktiv</span></div>
<div class="d" style="top:508px;background:#fbfbf9"><span style="left:0;width:101px;text-align:right">90062</span><span style="left:106px">Kaufmann Immobilien GmbH &amp;...</span><svg style="left:292px;top:2px" width="15" height="14" viewBox="0 0 15 14"><path d="M.5 .5h3v13h-3z" fill="#e4e6e7" stroke="#4a4f55" stroke-width=".9"/><rect x=".6" y="0" width="2.800" height="4.600" fill="#3fa51c"/><path d="M3.500 6h10.500v7.500H3.500z" fill="#eef0f1" stroke="#4a4f55" stroke-width=".9"/><rect x="5.300" y="8" width="7.400" height="4.600" fill="#5a6066"/><rect x="6.100" y="8.800" width="2.600" height="3" fill="#d4e9f8"/><rect x="9.400" y="8.800" width="2.500" height="3" fill="#d4e9f8"/></svg><span style="left:323px;width:52px;text-align:center">aktiv</span></div>
<div class="d" style="top:526px;background:#f3f2ee"><span style="left:0;width:101px;text-align:right">90064</span><span style="left:106px">Wittelsbacher Hof GmbH &amp; Co. K</span><svg style="left:292px;top:2px" width="15" height="14" viewBox="0 0 15 14"><path d="M.5 .5h3v13h-3z" fill="#e4e6e7" stroke="#4a4f55" stroke-width=".9"/><rect x=".6" y="0" width="2.800" height="4.600" fill="#3fa51c"/><path d="M3.500 6h10.500v7.500H3.500z" fill="#eef0f1" stroke="#4a4f55" stroke-width=".9"/><rect x="5.300" y="8" width="7.400" height="4.600" fill="#5a6066"/><rect x="6.100" y="8.800" width="2.600" height="3" fill="#d4e9f8"/><rect x="9.400" y="8.800" width="2.500" height="3" fill="#d4e9f8"/></svg><span style="left:323px;width:52px;text-align:center">aktiv</span></div>
<div class="d" style="top:544px;background:#fbfbf9"><span style="left:0;width:101px;text-align:right">90065</span><span style="left:106px">Zähringer Hof GmbH &amp; Co. KG</span><svg style="left:292px;top:2px" width="15" height="14" viewBox="0 0 15 14"><path d="M.5 .5h3v13h-3z" fill="#e4e6e7" stroke="#4a4f55" stroke-width=".9"/><rect x=".6" y="0" width="2.800" height="4.600" fill="#3fa51c"/><path d="M3.500 6h10.500v7.500H3.500z" fill="#eef0f1" stroke="#4a4f55" stroke-width=".9"/><rect x="5.300" y="8" width="7.400" height="4.600" fill="#5a6066"/><rect x="6.100" y="8.800" width="2.600" height="3" fill="#d4e9f8"/><rect x="9.400" y="8.800" width="2.500" height="3" fill="#d4e9f8"/></svg><span style="left:323px;width:52px;text-align:center">aktiv</span></div>
<div class="d" style="top:562px;background:#f3f2ee"><span style="left:0;width:101px;text-align:right">92071</span><span style="left:106px">*Titan Befestigungstechnik Gmb</span><svg style="left:292px;top:2px" width="15" height="14" viewBox="0 0 15 14"><path d="M.5 .5h3v13h-3z" fill="#e4e6e7" stroke="#4a4f55" stroke-width=".9"/><rect x=".6" y="0" width="2.800" height="4.600" fill="#3fa51c"/><path d="M3.500 6h10.500v7.500H3.500z" fill="#eef0f1" stroke="#4a4f55" stroke-width=".9"/><rect x="5.300" y="8" width="7.400" height="4.600" fill="#5a6066"/><rect x="6.100" y="8.800" width="2.600" height="3" fill="#d4e9f8"/><rect x="9.400" y="8.800" width="2.500" height="3" fill="#d4e9f8"/></svg><span style="left:323px;width:52px;text-align:center">inaktiv</span></div>
<div class="d" style="top:580px;background:#fbfbf9"><span style="left:0;width:101px;text-align:right">97026</span><span style="left:106px">G + B Medientechnik GmbH</span><svg style="left:292px;top:2px" width="15" height="14" viewBox="0 0 15 14"><path d="M.5 .5h3v13h-3z" fill="#e4e6e7" stroke="#4a4f55" stroke-width=".9"/><rect x=".6" y="0" width="2.800" height="4.600" fill="#3fa51c"/><path d="M3.500 6h10.500v7.500H3.500z" fill="#eef0f1" stroke="#4a4f55" stroke-width=".9"/><rect x="5.300" y="8" width="7.400" height="4.600" fill="#5a6066"/><rect x="6.100" y="8.800" width="2.600" height="3" fill="#d4e9f8"/><rect x="9.400" y="8.800" width="2.500" height="3" fill="#d4e9f8"/></svg><span style="left:323px;width:52px;text-align:center">aktiv</span></div>
<div class="d" style="top:598px;background:#f3f2ee"><span style="left:0;width:101px;text-align:right">98202</span><span style="left:106px">Hebborn GmbH &amp; Co. KG</span><svg style="left:292px;top:2px" width="15" height="14" viewBox="0 0 15 14"><path d="M.5 .5h3v13h-3z" fill="#e4e6e7" stroke="#4a4f55" stroke-width=".9"/><rect x=".6" y="0" width="2.800" height="4.600" fill="#3fa51c"/><path d="M3.500 6h10.500v7.500H3.500z" fill="#eef0f1" stroke="#4a4f55" stroke-width=".9"/><rect x="5.300" y="8" width="7.400" height="4.600" fill="#5a6066"/><rect x="6.100" y="8.800" width="2.600" height="3" fill="#d4e9f8"/><rect x="9.400" y="8.800" width="2.500" height="3" fill="#d4e9f8"/></svg><span style="left:323px;width:52px;text-align:center">aktiv</span></div>
<div class="d" style="top:616px;background:#fbfbf9"><span style="left:0;width:101px;text-align:right">99990</span><span style="left:106px">test</span><svg style="left:292px;top:2px" width="15" height="14" viewBox="0 0 15 14"><path d="M.5 .5h3v13h-3z" fill="#e4e6e7" stroke="#4a4f55" stroke-width=".9"/><rect x=".6" y="0" width="2.800" height="4.600" fill="#3fa51c"/><path d="M3.500 6h10.500v7.500H3.500z" fill="#eef0f1" stroke="#4a4f55" stroke-width=".9"/><rect x="5.300" y="8" width="7.400" height="4.600" fill="#5a6066"/><rect x="6.100" y="8.800" width="2.600" height="3" fill="#d4e9f8"/><rect x="9.400" y="8.800" width="2.500" height="3" fill="#d4e9f8"/></svg><span style="left:323px;width:52px;text-align:center">aktiv</span></div>
<div class="d" style="top:634px;background:#f3f2ee"><span style="left:0;width:101px;text-align:right">99991</span><span style="left:106px">Schönenborn</span><svg style="left:295px;top:2px" width="11" height="14" viewBox="0 0 11 14"><path d="M0 14c0-3 .8-4.600 3.200-5h4.600c2.400.4 3.200 2 3.200 5z" fill="#2e3f6e"/><path d="M4 8.800h3l-.2 5.200H4.200z" fill="#fff"/><path d="M5.100 9.300h.8V14h-.8z" fill="#15171f"/><ellipse cx="5.500" cy="4.800" rx="3.900" ry="4.400" fill="#fbdcc0" stroke="#dba67c" stroke-width=".5"/><path d="M1.500 5C1 1.800 2.900.2 5.500.2S10 1.800 9.500 5C9 3.600 8.200 3 6.600 3.300 4.600 3.700 2.700 3.200 1.500 5z" fill="#5a3317"/></svg><span style="left:323px;width:52px;text-align:center">aktiv</span></div>
<div class="d" style="top:652px;background:#fbfbf9"><span style="left:0;width:101px;text-align:right">99996</span><span style="left:106px">Muster-Vorgangsmappen</span><svg style="left:291px;top:0px" width="17" height="16" viewBox="0 0 17 16"><path d="M.5 1h2.800v13.500H.5z" fill="#e4e6e7" stroke="#4a4f55" stroke-width=".9"/><rect x=".6" y=".3" width="2.600" height="4.700" fill="#3fa51c"/><path d="M3.300 7h6v7.500h-6z" fill="#eef0f1" stroke="#4a4f55" stroke-width=".9"/><rect x="5" y="9.500" width="3.500" height="4" fill="#d4e9f8" stroke="#5a6066" stroke-width=".7"/><path d="M5.500 16c0-2.400 1-3.600 3-3.900h5c2 .3 3 1.500 3 3.900z" fill="#2e3f6e"/><path d="M10 12h2.400l-.2 4h-2z" fill="#fff"/><path d="M10.800 12.500h.8V16h-.8z" fill="#15171f"/><ellipse cx="11.200" cy="8.200" rx="3.600" ry="3.900" fill="#f6c79e" stroke="#d39a6c" stroke-width=".5"/><path d="M7.500 8.300C7.100 5.400 8.800 4 11.200 4s4.100 1.400 3.700 4.300c-.5-1.300-1.200-1.800-2.600-1.500-1.900.3-3.700-.1-4.800 1.500z" fill="#5a3317"/></svg><span style="left:323px;width:52px;text-align:center">aktiv</span></div>
<div class="d" style="top:670px;background:#f3f2ee"><span style="left:0;width:101px;text-align:right">99997</span><span style="left:106px">Muster Test</span><svg style="left:292px;top:2px" width="15" height="14" viewBox="0 0 15 14"><path d="M.5 .5h3v13h-3z" fill="#e4e6e7" stroke="#4a4f55" stroke-width=".9"/><rect x=".6" y="0" width="2.800" height="4.600" fill="#3fa51c"/><path d="M3.500 6h10.500v7.500H3.500z" fill="#eef0f1" stroke="#4a4f55" stroke-width=".9"/><rect x="5.300" y="8" width="7.400" height="4.600" fill="#5a6066"/><rect x="6.100" y="8.800" width="2.600" height="3" fill="#d4e9f8"/><rect x="9.400" y="8.800" width="2.500" height="3" fill="#d4e9f8"/></svg><span style="left:323px;width:52px;text-align:center">aktiv</span></div>
<div class="d" style="top:688px;background:#fbfbf9"><span style="left:0;width:101px;text-align:right">99998</span><span style="left:106px">Muster-Belege/Bank online</span><svg style="left:292px;top:2px" width="15" height="14" viewBox="0 0 15 14"><path d="M.5 .5h3v13h-3z" fill="#e4e6e7" stroke="#4a4f55" stroke-width=".9"/><rect x=".6" y="0" width="2.800" height="4.600" fill="#3fa51c"/><path d="M3.500 6h10.500v7.500H3.500z" fill="#eef0f1" stroke="#4a4f55" stroke-width=".9"/><rect x="5.300" y="8" width="7.400" height="4.600" fill="#5a6066"/><rect x="6.100" y="8.800" width="2.600" height="3" fill="#d4e9f8"/><rect x="9.400" y="8.800" width="2.500" height="3" fill="#d4e9f8"/></svg><span style="left:323px;width:52px;text-align:center">aktiv</span></div>
<div class="d" style="top:706px;background:#c4e68e;outline:1px dotted #222;outline-offset:-1px"><span style="left:0;width:101px;text-align:right">99999</span><span style="left:106px">Mustermandant</span><svg style="left:291px;top:0px" width="17" height="16" viewBox="0 0 17 16"><path d="M.5 1h2.800v13.500H.5z" fill="#e4e6e7" stroke="#4a4f55" stroke-width=".9"/><rect x=".6" y=".3" width="2.600" height="4.700" fill="#3fa51c"/><path d="M3.300 7h6v7.500h-6z" fill="#eef0f1" stroke="#4a4f55" stroke-width=".9"/><rect x="5" y="9.500" width="3.500" height="4" fill="#d4e9f8" stroke="#5a6066" stroke-width=".7"/><path d="M5.500 16c0-2.400 1-3.600 3-3.900h5c2 .3 3 1.500 3 3.900z" fill="#2e3f6e"/><path d="M10 12h2.400l-.2 4h-2z" fill="#fff"/><path d="M10.800 12.500h.8V16h-.8z" fill="#15171f"/><ellipse cx="11.200" cy="8.200" rx="3.600" ry="3.900" fill="#f6c79e" stroke="#d39a6c" stroke-width=".5"/><path d="M7.500 8.300C7.100 5.400 8.800 4 11.200 4s4.100 1.400 3.700 4.300c-.5-1.300-1.200-1.800-2.600-1.500-1.900.3-3.700-.1-4.800 1.500z" fill="#5a3317"/></svg><span style="left:323px;width:52px;text-align:center">aktiv</span></div>
<div class="t ms" style="left:1287px;top:233px">VJ:</div>
<div class="t ms" style="left:1287px;top:258px">Auftragsart:</div>
<div class="t ms" style="left:1287px;top:282px">Teilauftrag:</div>
<div class="a ms" style="left:1351px;top:231px;width:49px;height:20px;background:#fff;border:1px solid #7a7a7a;line-height:19px;padding-left:2px">2025</div>
<div class="a ms" style="left:1351px;top:256px;width:49px;height:20px;background:#fff;border:1px solid #7a7a7a;line-height:19px;padding-left:2px">33</div>
<div class="a" style="left:1441px;top:256px;width:187px;height:20px;background:#efefef;border:1px solid #cfcfcf;box-shadow:inset 0 0 0 1px #fff;font-size:10.7px;line-height:18px;padding-left:4px;color:#6d6d6d">Buchführung</div>
<div class="a" style="left:1411px;top:254px;width:21px;height:21px;background:#e1e1e1;border:1px solid #adadad"></div>
<svg style="left:1416px;top:260px" width="13" height="11" viewBox="0 0 13 11"><rect x=".5" y=".5" width="11.500" height="9.500" fill="#f6f6f6" stroke="#5c5e60"/><rect x=".5" y=".3" width="11.500" height="1.700" fill="#5c5e60"/><rect x="9.300" y=".2" width="2.700" height="1.600" fill="#c8202a"/><path d="M2.500 4h8" stroke="#9a9a9a" stroke-width="1"/><path d="M6.500 7.500h4v-1" fill="none" stroke="#5c5e60" stroke-width=".9"/></svg>
<div class="a" style="left:1411px;top:279px;width:21px;height:21px;background:#e5f1fb;border:1px solid #0078d7"></div>
<svg style="left:1416px;top:285px" width="13" height="11" viewBox="0 0 13 11"><rect x=".5" y=".5" width="11.500" height="9.500" fill="#f6f6f6" stroke="#5c5e60"/><rect x=".5" y=".3" width="11.500" height="1.700" fill="#5c5e60"/><rect x="9.300" y=".2" width="2.700" height="1.600" fill="#c8202a"/><path d="M2.500 4h8" stroke="#9a9a9a" stroke-width="1"/><path d="M6.500 7.500h4v-1" fill="none" stroke="#5c5e60" stroke-width=".9"/></svg>
<div class="a" style="left:1441px;top:279px;width:21px;height:21px;background:#e1e1e1;border:1px solid #adadad"></div>
<svg style="left:1445px;top:281px" width="16" height="17" viewBox="0 0 16 17"><path d="M6 2.500H1.500v12.500h9V7" fill="#f4f4f6" stroke="#3c3c3c" stroke-width="1"/><path d="M5.500 8h4M5.500 10.500h4M5.500 13h4" stroke="#3f8f16" stroke-width="1.200"/><path d="M3.300 8h1.200M3.300 13h1.200" stroke="#3f8f16" stroke-width="1.200"/><path d="M7.500 1.300l6 5.700M13.500 1.300l-6 5.700" stroke="#d3121c" stroke-width="1.900"/></svg>
<div class="a" style="left:1285px;top:305px;width:344px;height:249px;border:1px solid #7f7f7f;background:#fbfbf9"></div>
<div class="a ms" style="left:1286px;top:306px;width:127px;height:20px;line-height:20px;text-align:center;white-space:pre;background:linear-gradient(#fdfdfc,#ecebe8);border-right:1px solid #8d8d8d;border-bottom:1px solid #8d8d8d">Teilauftragsnummer</div>
<div class="a ms" style="left:1413px;top:306px;width:215px;height:20px;line-height:20px;text-align:center;white-space:pre;background:linear-gradient(#fdfdfc,#ecebe8);border-right:1px solid #8d8d8d;border-bottom:1px solid #8d8d8d;border-right:0">Teilauftragsbezeichnung</div>
<svg style="left:1451px;top:398px" width="13" height="18" viewBox="0 0 13 18"><path d="M.5.500h8l4 4v13h-12z" fill="#fff" stroke="#b8b8b8"/><path d="M8.500.500v4h4" fill="none" stroke="#b8b8b8"/></svg>
<div class="t ms" style="left:1285px;width:344px;text-align:center;top:424px">Keine Teilaufträge ausgewählt</div>
<div class="a" style="left:1422px;top:312px;width:168px;height:20px;background:#fff;border:1px solid #767676;color:#575757;font-size:11.6px;line-height:17px;padding-left:6px;white-space:pre">Auswahl der Teilauftragsarten</div>
<div class="a" style="left:873px;top:733px;width:765px;height:1px;background:#fff"></div>
<div class="a ms" style="left:1452px;top:749px;width:82px;height:25px;background:#e1e1e1;border:2px solid #0078d7;line-height:20px;text-align:center">Anlegen</div>
<div class="a ms" style="left:1542px;top:749px;width:82px;height:25px;background:#e1e1e1;border:1px solid #adadad;line-height:22px;text-align:center">Abbrechen</div>
<div class="a dk" style="left:1px;top:31px;width:742px;height:8px"></div>
<div class="a dk" style="left:35px;top:31px;width:708px;height:500px"></div>
<div class="a" style="left:43px;top:39px;width:692px;height:484px;background:#f3f1ed"></div>
<div class="a dk" style="left:711px;top:39px;width:24px;height:24px"></div>
<svg style="left:718px;top:46px" width="10" height="10" fill="none" stroke="#fff" stroke-width="1.900"><path d="M1.500 1.500l7 7M8.500 1.500l-7 7"/></svg>
<div class="t" style="left:53px;top:49px">Suchen in:</div>
<div class="inp" style="left:53px;top:69px;width:145px">Mandantenchecklisten</div>
<svg style="left:184px;top:77px" width="9" height="5"><path d="M0 0h9l-4.500 5z" fill="#111"/></svg>
<div class="t" style="left:53px;top:100px">Zentr. Mandant:</div>
<div class="t" style="left:154px;top:100px">Auftrag:</div>
<div class="t" style="left:213px;top:100px">Teilauftrag:</div>
<div class="t" style="left:287px;top:100px">VJ:</div>
<div class="t" style="left:353px;top:100px">Status:</div>
<div class="inp" style="left:53px;top:120px;width:55px;letter-spacing:-.5px;">99999</div>
<div class="inp" style="left:154px;top:120px;width:35px;letter-spacing:-.5px;">33</div>
<div class="inp" style="left:213px;top:120px;width:35px;"></div>
<div class="inp" style="left:287px;top:120px;width:50px;letter-spacing:-.5px;">2025</div>
<div class="inp" style="left:353px;top:120px;width:110px;">Nicht erledigt</div>
<svg style="left:450px;top:128px" width="9" height="5"><path d="M0 0h9l-4.500 5z" fill="#111"/></svg>
<div class="btn" style="left:53px;top:160px;width:80px;padding-left:24px">Suchen</div>
<svg style="left:63px;top:163px" width="16" height="16" viewBox="0 0 16 16"><circle cx="6" cy="6" r="4.300" fill="#e9f3fb" stroke="#7b858d" stroke-width="1.300"/><path d="M9.300 9.300l4.500 4.500" stroke="#5b646b" stroke-width="2.200" stroke-linecap="round"/></svg>
<div class="btn" style="left:143px;top:160px;width:107px;font-size:11.5px">Suche zurücksetzen</div>
<div class="a" style="left:54px;top:202px;width:671px;height:311px;background:#fff;border-bottom:1px solid #d5d3cf;border-right:1px solid #e6e4e0"></div>
<div class="hc hs" style="left:55px;width:56px">Zentr....</div>
<svg style="left:79px;top:203px" width="8" height="4"><path d="M0 4l4-4 4 4z" fill="#7fb6e0"/></svg>
<div class="hc" style="left:111px;width:134px">Name</div>
<div class="hc hs" style="left:245px;width:56px">VJ</div>
<svg style="left:269px;top:203px" width="8" height="4"><path d="M0 0h8l-4 4z" fill="#7fb6e0"/></svg>
<div class="hc hs" style="left:301px;width:45px">Auft...</div>
<svg style="left:319px;top:203px" width="8" height="4"><path d="M0 4l4-4 4 4z" fill="#7fb6e0"/></svg>
<div class="hc hs" style="left:346px;width:44px">Teila...</div>
<svg style="left:364px;top:203px" width="8" height="4"><path d="M0 4l4-4 4 4z" fill="#7fb6e0"/></svg>
<div class="hc" style="left:390px;width:45px">Teila...</div>
<div class="hc" style="left:435px;width:134px">Prozess</div>
<div class="hc" style="left:569px;width:56px">Status</div>
<div class="hc" style="left:625px;width:99px">Fortschritt</div>
<div class="a" style="left:54px;top:224px;width:671px;height:1px;background:#d9e4ee"></div>
<svg style="left:375px;top:320px" width="29" height="37" viewBox="0 0 29 37"><path d="M.5.500h19.500l8.500 8.500v27.500H.5z" fill="#fff" stroke="#c3c3c3"/><path d="M20 .5v8.500h8.500" fill="#f6f6f6" stroke="#c3c3c3"/></svg>
<div class="t" style="left:54px;width:671px;text-align:center;top:366px;font-size:11.8px">Keine Daten vorhanden.</div>
<div class="t" style="left:54px;width:671px;text-align:center;top:381px;font-size:11.5px;color:#0a7d7d;text-decoration:underline">Jetzt neue Checklisten anlegen...</div>
<div class="a" style="left:1px;top:39px;width:34px;height:944px;background:#f3f1ed;border-left:1px solid #fcfcfb;border-top:1px solid #fcfcfb"></div>
<div class="a dk" style="left:35px;top:530px;width:8px;height:461px"></div>
<div class="a dk" style="left:1px;top:983px;width:42px;height:8px"></div>
<svg style="left:3px;top:44px" width="31" height="31" viewBox="0 0 31 31"><linearGradient id="lb" x1="0" y1="0" x2="1" y2="1"><stop offset="0" stop-color="#e4e4e3"/><stop offset=".3" stop-color="#ffffff"/><stop offset="1" stop-color="#ececeb"/></linearGradient>
<clipPath id="lc"><path d="M.5.500H28v28H9.500C4 28.500.5 24 .5 19z"/></clipPath>
<path d="M29 1.500v28H10" fill="none" stroke="#8d8d8b" stroke-width="1.600" opacity=".75"/>
<path d="M.5.500H28v28H9.500C4 28.500.5 24 .5 19z" fill="url(#lb)" stroke="#a9a9a7"/>
<g clip-path="url(#lc)"><circle cx="16.400" cy="4.500" r="8.300" fill="#f3f3f3" stroke="#6f6f6f"/><circle cx="16.400" cy="23.500" r="8.300" fill="#f0f0f0" stroke="#6f6f6f"/></g>
<path d="M12 3l4.500 5L22 0" fill="none" stroke="#2c5f14" stroke-width="3.400"/><path d="M12 3l4.500 5L22 0" fill="none" stroke="#86c94a" stroke-width="1.700"/>
<path d="M12 22l4.500 5 8-11.500" fill="none" stroke="#2c5f14" stroke-width="3.400"/><path d="M12 22l4.500 5 8-11.500" fill="none" stroke="#86c94a" stroke-width="1.700"/></svg>
<svg style="left:8px;top:898px" width="20" height="20" viewBox="0 0 20 20"><circle cx="7.800" cy="7.700" r="4.700" fill="#dff0fb" stroke="#9aa4ad" stroke-width="1.300"/><circle cx="6.800" cy="6.500" r="2.200" fill="#fff" opacity=".8"/><path d="M11.500 11.500l5 5" stroke="#3f4a55" stroke-width="2.200" stroke-linecap="round"/></svg>
<svg style="left:4px;top:926px" width="30" height="20" viewBox="0 0 30 20"><path d="M2.500 14.500l8-7" stroke="#6b7795" stroke-width="2.800" stroke-linecap="round"/><path d="M9 2.500c-2 1.500-2 4.500 0 6.300 1.800 1.600 4.500 1.200 5.800-.8l-2.800.2-1.800-2 .6-2.800c-.6-.6-1.200-.9-1.800-.9z" fill="#6b7795"/><path d="M19 7.500h7l-3.500 4z" fill="#000"/></svg>
<svg style="left:4px;top:952px" width="30" height="20" viewBox="0 0 30 20"><radialGradient id="hg" cx=".4" cy=".3" r=".8"><stop offset="0" stop-color="#a6d85a"/><stop offset="1" stop-color="#3f7f1b"/></radialGradient><circle cx="8" cy="10" r="6.900" fill="url(#hg)" stroke="#3a7418" stroke-width=".8"/><text x="8" y="14.200" text-anchor="middle" font-family="Liberation Sans,sans-serif" font-weight="700" font-size="11.500" fill="#fff">?</text><path d="M19 8h7l-3.500 4z" fill="#000"/></svg>
<div class="a" style="left:43px;top:530px;width:251px;height:184px;background:#f0f0f0"></div>
<div class="a" style="left:43px;top:530px;width:235px;height:159px;background:#fcfcfa;overflow:hidden" id="ltree">
<svg style="left:37px;top:-4px" width="10" height="14" viewBox="0 0 10 14"><path d="M.5.500h6l3 3v10H.5z" fill="#fff" stroke="#4f4f4f"/><path d="M6.500 .5v3h3" fill="#e6e6e6" stroke="#6f6f6f" stroke-width=".8"/><path d="M2 6.500h6M2 8.500h6M2 10.500h6" stroke="#3f7f1c" stroke-width="1.300"/></svg>
<div class="tr" style="left:56px;top:-5px">ohne Fibu/Lohn/Rechnungen S+P</div>
<svg style="left:37px;top:12px" width="10" height="14" viewBox="0 0 10 14"><path d="M.5.500h6l3 3v10H.5z" fill="#fff" stroke="#4f4f4f"/><path d="M6.500 .5v3h3" fill="#e6e6e6" stroke="#6f6f6f" stroke-width=".8"/><path d="M2 6.500h6M2 8.500h6M2 10.500h6" stroke="#3f7f1c" stroke-width="1.300"/></svg>
<div class="tr" style="left:56px;top:11px">Mustervorgangsmappen</div>
<svg style="left:37px;top:28px" width="10" height="14" viewBox="0 0 10 14"><path d="M.5.500h6l3 3v10H.5z" fill="#fff" stroke="#4f4f4f"/><path d="M6.500 .5v3h3" fill="#e6e6e6" stroke="#6f6f6f" stroke-width=".8"/><path d="M2 6.500h6M2 8.500h6M2 10.500h6" stroke="#3f7f1c" stroke-width="1.300"/></svg>
<div class="tr" style="left:56px;top:27px">Einsprüche/ Anträge/ Widerspruch</div>
<svg style="left:37px;top:44px" width="10" height="14" viewBox="0 0 10 14"><path d="M.5.500h6l3 3v10H.5z" fill="#fff" stroke="#4f4f4f"/><path d="M6.500 .5v3h3" fill="#e6e6e6" stroke="#6f6f6f" stroke-width=".8"/><path d="M2 6.500h6M2 8.500h6M2 10.500h6" stroke="#3f7f1c" stroke-width="1.300"/></svg>
<div class="tr" style="left:56px;top:43px">zur Erledigung S+P individuell</div>
<svg style="left:37px;top:60px" width="10" height="14" viewBox="0 0 10 14"><path d="M.5.500h6l3 3v10H.5z" fill="#fff" stroke="#4f4f4f"/><path d="M6.500 .5v3h3" fill="#e6e6e6" stroke="#6f6f6f" stroke-width=".8"/><path d="M2 6.500h6M2 8.500h6M2 10.500h6" stroke="#3f7f1c" stroke-width="1.300"/></svg>
<div class="tr" style="left:56px;top:59px">Einsprüche/ Anträge/ Widerspruc...</div>
<svg style="left:37px;top:76px" width="10" height="14" viewBox="0 0 10 14"><path d="M.5.500h6l3 3v10H.5z" fill="#fff" stroke="#4f4f4f"/><path d="M6.500 .5v3h3" fill="#e6e6e6" stroke="#6f6f6f" stroke-width=".8"/><path d="M2 6.500h6M2 8.500h6M2 10.500h6" stroke="#3f7f1c" stroke-width="1.300"/></svg>
<div class="tr" style="left:56px;top:75px">zur Kenntnis Nutzer</div>
<svg style="left:37px;top:92px" width="10" height="14" viewBox="0 0 10 14"><path d="M.5.500h6l3 3v10H.5z" fill="#fff" stroke="#4f4f4f"/><path d="M6.500 .5v3h3" fill="#e6e6e6" stroke="#6f6f6f" stroke-width=".8"/><path d="M2 6.500h6M2 8.500h6M2 10.500h6" stroke="#3f7f1c" stroke-width="1.300"/></svg>
<div class="tr" style="left:56px;top:91px">Stundungsbescheide</div>
<svg style="left:37px;top:108px" width="10" height="14" viewBox="0 0 10 14"><path d="M.5.500h6l3 3v10H.5z" fill="#fff" stroke="#4f4f4f"/><path d="M6.500 .5v3h3" fill="#e6e6e6" stroke="#6f6f6f" stroke-width=".8"/><path d="M2 6.500h6M2 8.500h6M2 10.500h6" stroke="#3f7f1c" stroke-width="1.300"/></svg>
<div class="tr" style="left:56px;top:107px">ohne Belege</div>
<svg style="left:37px;top:124px" width="10" height="14" viewBox="0 0 10 14"><path d="M.5.500h6l3 3v10H.5z" fill="#fff" stroke="#4f4f4f"/><path d="M6.500 .5v3h3" fill="#e6e6e6" stroke="#6f6f6f" stroke-width=".8"/><path d="M2 6.500h6M2 8.500h6M2 10.500h6" stroke="#3f7f1c" stroke-width="1.300"/></svg>
<div class="tr" style="left:56px;top:123px">Mandantenrundschreiben</div>
<svg style="left:37px;top:140px" width="10" height="14" viewBox="0 0 10 14"><path d="M.5.500h6l3 3v10H.5z" fill="#fff" stroke="#4f4f4f"/><path d="M6.500 .5v3h3" fill="#e6e6e6" stroke="#6f6f6f" stroke-width=".8"/><path d="M2 6.500h6M2 8.500h6M2 10.500h6" stroke="#3f7f1c" stroke-width="1.300"/></svg>
<div class="tr" style="left:56px;top:139px">Kenntnisnahme PA</div>
<svg style="left:37px;top:156px" width="10" height="14" viewBox="0 0 10 14"><path d="M.5.500h6l3 3v10H.5z" fill="#fff" stroke="#4f4f4f"/><path d="M6.500 .5v3h3" fill="#e6e6e6" stroke="#6f6f6f" stroke-width=".8"/><path d="M2 6.500h6M2 8.500h6M2 10.500h6" stroke="#3f7f1c" stroke-width="1.300"/></svg>
<div class="tr" style="left:56px;top:155px">SWS Verfassung Personal</div>
</div>
<svg style="left:280px;top:677px" width="11" height="8" fill="none" stroke="#555" stroke-width="1.900"><path d="M1.500 1.500l4 4 4-4"/></svg>
<div class="a" style="left:60px;top:690px;width:118px;height:16px;background:#cdcdcd"></div>
<svg style="left:47px;top:692px" width="8" height="11" fill="none" stroke="#555" stroke-width="1.500"><path d="M6 1.500l-4 4 4 4"/></svg>
<svg style="left:264px;top:692px" width="8" height="11" fill="none" stroke="#555" stroke-width="1.500"><path d="M2 1.500l4 4-4 4"/></svg>
<div class="a" style="left:278px;top:689px;width:16px;height:17px;background:#fbfbf9"></div><div class="a" style="left:43px;top:706px;width:251px;height:8px;background:#f3f1ed"></div>
<div class="a" style="left:150px;top:709px;width:34px;height:2px;background:repeating-linear-gradient(90deg,#8b8b8b 0 2px,transparent 2px 4px)"></div>
<div class="nv" style="top:714px;">Unsere Kanzlei</div>
<svg style="left:47px;top:719px" width="14" height="14" viewBox="0 0 16 16"><circle cx="5" cy="5" r="2.600" fill="#e8c39c"/><path d="M0 14c0-4 2-5.500 5-5.500S10 10 10 14z" fill="#5b6e8f"/><circle cx="11" cy="4" r="2.800" fill="#e8c39c"/><path d="M6 14c0-4.500 2-6 5-6s5 1.500 5 6z" fill="#2f4468"/><path d="M10.300 8.500h1.400L11 12z" fill="#fff"/></svg>
<div class="nv" style="top:739px;">Aufträge</div>
<svg style="left:47px;top:744px" width="14" height="14" viewBox="0 0 14 14"><path d="M2.500 3l3.500 1.500 2-.5 3.500-1v5.500l-3 3-2 .5-2.500-2-1.500-1.500z" fill="#f0bf94" stroke="#b67c4b" stroke-width=".6"/><path d="M0 1.500l2.800 1.300V9L0 8zM14 1.500l-2.800 1.300V9L14 8z" fill="#3a4254"/><path d="M5 7.500l3 2M6.500 6.500L9 8.500" stroke="#b67c4b" stroke-width=".6" fill="none"/></svg>
<div class="nv" style="top:764px;background:#c4e68e;">Dokumente</div>
<svg style="left:47px;top:769px" width="14" height="14" viewBox="0 0 14 14"><rect x="0" y="0" width="13.500" height="14" rx="1" fill="#4b5179"/><rect x="1" y="1" width="3" height="1.200" fill="#e8c533"/><rect x="5.200" y="1" width="3" height="1.200" fill="#6fb1e4"/><rect x="9.400" y="1" width="3" height="1.200" fill="#7fc241"/><g fill="#fff"><rect x="1" y="3.200" width="3" height="2.300"/><rect x="5.200" y="3.200" width="3" height="2.300"/><rect x="9.400" y="3.200" width="3" height="2.300"/><rect x="1" y="6.300" width="3" height="2.300"/><rect x="5.200" y="6.300" width="3" height="2.300"/><rect x="9.400" y="6.300" width="3" height="2.300"/></g><g fill="none" stroke="#e9eaf3" stroke-width=".8"><circle cx="2.500" cy="11.400" r="1.100"/><circle cx="6.700" cy="11.400" r="1.100"/><circle cx="10.900" cy="11.400" r="1.100"/></g></svg>
<div class="nv" style="top:789px;">Termine</div>
<svg style="left:47px;top:794px" width="14" height="14" viewBox="0 0 14 14"><path d="M.5.500h13v10l-3 3H.5z" fill="#fff" stroke="#6a6a6a"/><rect x=".5" y=".5" width="13" height="2.800" fill="#7d9bc0" stroke="#5b7699" stroke-width=".6"/><path d="M13.500 10.500h-3v3" fill="#ddd" stroke="#6a6a6a" stroke-width=".7"/><text x="6.500" y="11.300" text-anchor="middle" font-family="Liberation Sans,sans-serif" font-size="8.500" fill="#2b2b2b">17</text></svg>
<div class="nv" style="top:814px;">Aufgaben</div>
<svg style="left:47px;top:819px" width="14" height="14" viewBox="0 0 16 16"><rect x="1.500" y="3.500" width="11" height="11" fill="#fff" stroke="#6a6a6a"/><path d="M4 8l3 4 7-11" fill="none" stroke="#4f9a22" stroke-width="2.200"/></svg>
<div class="nv" style="top:839px;">Digitale Kommunikation mit Instituti...</div>
<svg style="left:47px;top:844px" width="14" height="14" viewBox="0 0 16 16"><path d="M1 7l5-5v3h5v4H6v3z" fill="#eaf1fb" stroke="#4a6fa8"/><path d="M15 9l-4-4v2.500H8v3h3V13z" fill="#cfe0f5" stroke="#4a6fa8" stroke-width=".8"/></svg>
<div class="nv" style="top:864px;">Wissen und Service</div>
<svg style="left:47px;top:869px" width="14" height="14" viewBox="0 0 16 16"><path d="M6 1h1.600v14H6z" fill="#7a6a4a"/><path d="M1 2.500h9l2 2-2 2H1z" fill="#f2c94c" stroke="#a98a1e" stroke-width=".8"/><path d="M14 7.500H7.600v3.500H14l-1.500-1.700z" fill="#f2c94c" stroke="#a98a1e" stroke-width=".8"/></svg>
<div class="nv" style="top:889px;">Auswertungen</div>
<svg style="left:47px;top:894px" width="14" height="14" viewBox="0 0 16 16"><path d="M2.500.500h7l3 3v12h-10z" fill="#fff" stroke="#6a6a6a"/><path d="M4.500 13v-3M6.500 13V8M8.500 13V6M10.500 13V9" stroke="#3e7cc4" stroke-width="1.400"/></svg>
<div class="nv" style="top:914px;">Organisation</div>
<svg style="left:47px;top:919px" width="14" height="14" viewBox="0 0 16 16"><circle cx="6" cy="4" r="3" fill="#a7b0c6"/><path d="M0 15c0-4.500 2.500-6 6-6s6 1.500 6 6z" fill="#a7b0c6"/><path d="M7 14l6-6" stroke="#4b5f8a" stroke-width="2.600" stroke-linecap="round"/><path d="M12 4.500a3 3 0 1 0 3.500 3.500l-2 .3-1.500-1.500z" fill="#4b5f8a"/></svg>
<svg style="left:280px;top:946px" width="9" height="14" viewBox="0 0 9 14" fill="none" stroke="#111" stroke-width="1.100"><path d="M1 .5l2.500 2.500L1 5.500M5 .5l2.500 2.500L5 5.500"/><path d="M1.500 10h6l-3 3z" fill="#111" stroke="none"/></svg>
<div class="a" style="left:1px;top:991px;width:1719px;height:40px;background:#05070d"></div>
<svg style="left:17px;top:1003px" width="17" height="17" viewBox="0 0 17 17" fill="#fff"><path d="M0 2.300l7-1v6.700H0zM8 1.200L17 0v8H8zM0 9h7v6.700l-7-1zM8 9h9v8l-9-1.200z"/></svg>
<svg style="left:64px;top:1002px" width="18" height="18" viewBox="0 0 18 18" fill="none" stroke="#fff" stroke-width="1.400"><circle cx="11" cy="7" r="5.300"/><path d="M7.300 10.700L1 17"/></svg>
<svg style="left:111px;top:1003px" width="19" height="16" viewBox="0 0 19 16" fill="none" stroke="#fff" stroke-width="1.300"><rect x="3" y="3.500" width="9" height="9"/><path d="M1 1h3M1 15h3M11 1h3M11 15h3M16.500 0v3M16.500 6.500v9"/></svg>
<svg style="left:159px;top:998px" width="26" height="26" viewBox="0 0 26 26"><linearGradient id="eg" x1="0" y1="0" x2="1" y2="0"><stop offset="0" stop-color="#1f86e0"/><stop offset=".45" stop-color="#2bb6c9"/><stop offset="1" stop-color="#52d67a"/></linearGradient>
<path d="M1 13C1 6 6 1 13 1c7.500 0 12 5 12 10.500 0 4-3 6-6 6-2 0-3-1-3-2 0-1.500 1.200-1.800 1.200-4C17.200 9 15 7 12 7 7 7 3 11 3 16c-1.300-1-2-2-2-3z" fill="url(#eg)"/>
<path d="M3 16c0-5 4-9 9-9 2 0 4 1 4.800 2.500C13 8.500 10 11 10.500 15c.6 4.500 5 7.500 9.500 7 2.500-.3 4-1.500 5-3-1.500 4-5.500 6.500-10 6.500C8 25.500 3 21 3 16z" fill="#0f5fc0"/>
<circle cx="12" cy="13.500" r="3.400" fill="#05070d"/><path d="M12 13c1-3 4-3 5-1" stroke="#05070d" stroke-width="2" fill="none"/>
<rect x=".5" y="16.500" width="12" height="8.500" rx="1" fill="#d9780f"/><rect x=".5" y="16.500" width="12" height="3.600" rx="1" fill="#f2a12e"/><path d="M4.500 16.500v-1.600h4v1.600" fill="none" stroke="#e08a1a" stroke-width="1.200"/><rect x="5.800" y="19.300" width="1.400" height="1.600" fill="#ffe08a"/></svg>
<svg style="left:210px;top:1002px" width="22" height="18" viewBox="0 0 22 18"><path d="M0 .5h8l1.500 1.500H22v4H0z" fill="#e8a317"/><rect x="0" y="2.800" width="22" height="13.200" rx=".8" fill="#fcd462"/><path d="M0 14h22v2H0z" fill="#f2bf3c"/><path d="M4.500 17.500v-7a1 1 0 0 1 1-1h11a1 1 0 0 1 1 1v7h-3.500v-4.300H8v4.300z" fill="#3b97e3"/></svg>
<svg style="left:257px;top:999px" width="28" height="26" viewBox="0 0 28 26"><ellipse cx="13" cy="11.500" rx="11.500" ry="6.500" transform="rotate(-20 13 11.500)" fill="#8a8d90"/><ellipse cx="13" cy="9.500" rx="11.500" ry="6.300" transform="rotate(-20 13 9.500)" fill="#fbfbfb" stroke="#e0262d" stroke-width="1.300"/><path d="M10 5l6 12M16.500 4L11 16" stroke="#8b9297" stroke-width="1.100"/><ellipse cx="20" cy="20" rx="2.300" ry="3.400" transform="rotate(-35 20 20)" fill="none" stroke="#1e8ad6" stroke-width="1.700"/><ellipse cx="14.800" cy="22" rx="2" ry="3.200" transform="rotate(20 14.800 22)" fill="none" stroke="#1e8ad6" stroke-width="1.700"/></svg>
<div class="a" style="left:295px;top:991px;width:48px;height:38px;background:#333438"></div>
<svg style="left:306px;top:998px" width="24" height="24" viewBox="0 0 24 24"><linearGradient id="ag" x1="0" y1="0" x2="0" y2="1"><stop offset="0" stop-color="#9ad94a"/><stop offset="1" stop-color="#4f9a1c"/></linearGradient><rect x="1" y="1" width="21.500" height="21.500" fill="#fdfdfd"/><path d="M20.500 1v21.500H1" fill="none" stroke="#c9c9c9"/>
<path d="M10 1.500C4 4.500 0 10.500 3 16.500c2.500 5 9 6 14 3.500l-1.200 3.200L22.500 17 15.500 12l.6 3.200C11.500 16.500 8 14 8 10c0-3 1.500-5.500 4-6.800.2-1-.7-2-2-1.700z" fill="url(#ag)"/><path d="M9.500 3.500C6 6 4.500 10 6 14" fill="none" stroke="#d3f0a8" stroke-width="1"/></svg>
<svg style="left:356px;top:1000px" width="25" height="22" viewBox="0 0 25 22"><rect x="6.500" y="0" width="17.500" height="16" rx="1" fill="#1a8fe0"/><rect x="6.500" y="0" width="9" height="5.500" fill="#0f78d4"/><rect x="15.500" y="0" width="8.500" height="5.500" fill="#35b8f1"/><rect x="15.500" y="5.500" width="8.500" height="5.500" fill="#1f9ee8"/><rect x="6.500" y="5.500" width="9" height="5.500" fill="#0a63b8"/><path d="M6.500 10l9 6 9-6v11a1 1 0 0 1-1 1H7.500a1 1 0 0 1-1-1z" fill="#1587d8"/><path d="M6.500 21.500l18-10.500v10a1 1 0 0 1-1 1z" fill="#29a7ea"/><rect x="0" y="4.500" width="12.500" height="12.500" rx="1" fill="#0f6cbd"/><circle cx="6.200" cy="10.700" r="3.200" fill="none" stroke="#fff" stroke-width="1.700"/></svg>
<svg style="left:405px;top:999px" width="24" height="24" viewBox="0 0 24 24"><radialGradient id="lg" cx=".5" cy=".3" r=".8"><stop offset="0" stop-color="#b9c4fb"/><stop offset="1" stop-color="#5e73e2"/></radialGradient><circle cx="12" cy="12" r="11.300" fill="#eef0fc"/><circle cx="12" cy="12" r="9.800" fill="url(#lg)"/><path d="M8.300 11V8.500a3.700 3.700 0 0 1 7.400 0V11" fill="none" stroke="#0d0f16" stroke-width="1.900"/><rect x="6" y="10.500" width="12" height="8.500" rx=".6" fill="#0d0f16"/><path d="M6 13.300h12M6 16h12" stroke="#5b6bb8" stroke-width=".8"/><rect x="11.300" y="13" width="1.400" height="3" fill="#9aa6e8"/></svg>
<svg style="left:454px;top:999px" width="22" height="22" viewBox="0 0 22 22"><path d="M0 0h22v22H6a6 6 0 0 1-6-6z" fill="#f3f2ef"/><path d="M.5 9.500l1-5.500h16l2 5.500z" fill="#e4676c"/><path d="M1.500 4h16l.4 1.200H1.300z" fill="#f29a9d"/><rect x="0" y="9.500" width="17.500" height="12.500" fill="#fbfbf8"/><rect x="17.500" y="9.500" width="4.500" height="12.500" fill="#fdfdfc"/>
<g fill="#57a82a"><rect x="1.500" y="12" width="3.200" height="4"/><rect x="6.500" y="12" width="3.200" height="4"/><rect x="11.500" y="12" width="3.200" height="4"/><rect x="4" y="18" width="3.200" height="4"/><rect x="9" y="18" width="3.200" height="4"/><rect x="13.500" y="18" width="3" height="4"/></g><path d="M0 22V16a6 6 0 0 0 6 6z" fill="#05070d"/></svg>
<div class="a" style="left:152px;top:1029px;width:40px;height:2px;background:#76b9ed"></div>
<div class="a" style="left:295px;top:1029px;width:48px;height:2px;background:#76b9ed"></div>
<div class="a" style="left:348px;top:1029px;width:32px;height:2px;background:#76b9ed"></div>
<div class="a" style="left:381px;top:1029px;width:7px;height:2px;background:#5f86ae"></div>
<div class="a" style="left:397px;top:1029px;width:40px;height:2px;background:#76b9ed"></div>
<div class="a" style="left:446px;top:1029px;width:40px;height:2px;background:#76b9ed"></div>
<svg style="left:1513px;top:1006px" width="14" height="9" fill="none" stroke="#fff" stroke-width="1.400"><path d="M1 8l6-6 6 6"/></svg>
<svg style="left:1536px;top:1003px" width="14" height="17" viewBox="0 0 14 17"><rect x="2" y="1" width="10" height="3" fill="#cfd2d4"/><rect x="1" y="3.500" width="12" height="12.500" fill="#4f9e33"/><rect x="1" y="3.500" width="12" height="3" fill="#7cc45a"/></svg>
<svg style="left:1559px;top:1003px" width="18" height="17" viewBox="0 0 18 17" fill="none" stroke="#fff" stroke-width="1.200"><rect x="4.500" y="2.500" width="12" height="8"/><path d="M10.500 10.500v4M7 15h7"/><rect x=".6" y=".6" width="4" height="6" fill="#05070d"/><path d="M2.600 6.600v4"/></svg>
<svg style="left:1583px;top:1003px" width="18" height="16" viewBox="0 0 18 16" fill="none" stroke="#fff" stroke-width="1.200"><path d="M1 6h3l4-3.500v11L4 10H1z"/><path d="M10.500 5.500a3.500 3.500 0 0 1 0 5M12.700 3.500a6 6 0 0 1 0 9M15 1.500a9 9 0 0 1 0 13"/></svg>
<div class="t" style="left:1607px;width:60px;text-align:center;top:994px;color:#fff;font-size:10.9px">12:15</div>
<div class="t" style="left:1607px;width:60px;text-align:center;top:1012px;color:#fff;font-size:10.9px">08.01.2025</div>
<svg style="left:1682px;top:1002px" width="18" height="17" viewBox="0 0 18 17"><path d="M1 1h15v11H8l-4 4v-4H1z" fill="#fff"/><path d="M3.500 4h10M3.500 6.500h10M3.500 9h7" stroke="#05070d" stroke-width="1"/></svg>
<div class="a" style="left:1687px;top:1011px;width:21px;height:14px;border-radius:7px;background:#3b3d42;border:1px solid #9a9a9a;color:#fff;font-size:11.5px;line-height:12px;text-align:center">22</div>
<div class="a" style="left:0;top:1031px;width:1720px;height:49px;background:linear-gradient(90deg,#2c3fa6 0,#2135a7 25%,#1f33a6 45%,#2a3eac 70%,#3a4aae 100%);border-top:1px solid #4a5cb4"></div>
<svg style="left:0;top:1037px" width="30" height="40" viewBox="0 0 30 40"><circle cx="10" cy="13" r="5" fill="#7b83eb"/><path d="M-4 16h18v12a8 8 0 0 1-8 8h-10z" fill="#5b62c9"/><rect x="-6" y="11" width="14" height="14" rx="1.500" fill="#4b53bc"/><text x="2.500" y="22" text-anchor="middle" font-family="Liberation Sans,sans-serif" font-weight="700" font-size="9" fill="#fff">T</text><circle cx="18" cy="9" r="8" fill="#13a10e"/><path d="M14.500 9l2.500 2.500 4.500-5" fill="none" stroke="#fff" stroke-width="1.800"/></svg>
<div class="a" style="left:6px;top:1073px;width:6px;height:3px;border-radius:2px;background:#8e97d6"></div>
<div class="a" style="left:33px;top:1036px;width:40px;height:41px;border-radius:4px;background:#4257b6;border:1px solid #4f63bd"></div>
<svg style="left:41px;top:1045px" width="24" height="22" viewBox="0 0 24 22"><rect x=".5" y=".5" width="23" height="15" fill="#3d9ad6" stroke="#2a3c55"/><path d="M1 1h22L1 15z" fill="#58b4e6" opacity=".7"/><path d="M11 16h2v3h3.500v1.200h-9V19H11z" fill="#2a2f3a"/></svg>
<div class="a" style="left:45px;top:1072px;width:16px;height:3px;border-radius:2px;background:#9db8f2"></div>
<svg style="left:85px;top:1044px" width="25" height="25" viewBox="0 0 25 25"><rect width="25" height="25" rx="3" fill="#0a1560"/><circle cx="12.500" cy="12.500" r="9.300" fill="#fff"/><path d="M4.500 12.500l4.500-3v2h7v-2l4.500 3-4.500 3v-2H9v2z" fill="#0a1560"/></svg>
<div class="a" style="left:94px;top:1073px;width:6px;height:3px;border-radius:2px;background:#8e97d6"></div>
<svg style="left:1396px;top:1051px" width="13" height="8" fill="none" stroke="#fff" stroke-width="1.400"><path d="M1 7l5.500-5.500L12 7"/></svg>
<svg style="left:1427px;top:1047px" width="18" height="18" viewBox="0 0 18 18"><path d="M1 2l7-1.500L15 2v7c0 4-3 6.500-7 8-4-1.500-7-4-7-8z" fill="#2f8fe0" stroke="#d7ecff" stroke-width="1"/><path d="M4.500 8.500l3 3 5-6" fill="none" stroke="#fff" stroke-width="1.600"/><rect x="10" y="10" width="7" height="6" rx="1" fill="#f0a23a"/><path d="M11.500 10V8.500a2 2 0 0 1 4 0V10" fill="none" stroke="#f0a23a" stroke-width="1.200"/></svg>
<svg style="left:1458px;top:1048px" width="20" height="15" viewBox="0 0 20 15"><path d="M5 13a4 4 0 0 1-.5-8A6 6 0 0 1 16 6.500 3.300 3.300 0 0 1 15.500 13z" fill="#1a1a1a" stroke="#e6e6e6" stroke-width="1.300"/><path d="M3 1.500l14 12" stroke="#e6e6e6" stroke-width="1.500"/></svg>
<svg style="left:1491px;top:1047px" width="18" height="18" viewBox="0 0 18 18"><circle cx="11" cy="4" r="2.800" fill="#7b83eb"/><path d="M6 7h10v6a4 4 0 0 1-4 4H6z" fill="#5b62c9"/><rect x="0" y="4" width="9" height="9" rx="1" fill="#4b53bc"/><text x="4.500" y="11.500" text-anchor="middle" font-family="Liberation Sans,sans-serif" font-weight="700" font-size="7" fill="#fff">T</text><circle cx="13.500" cy="13.500" r="3.500" fill="#7fba4c"/><path d="M12 13.500l1.200 1.200 2-2.200" fill="none" stroke="#fff" stroke-width="1"/></svg>
<svg style="left:1522px;top:1047px" width="18" height="18" viewBox="0 0 18 18" fill="none" stroke="#6ec1ff" stroke-width="1.600"><path d="M15 9a6 6 0 1 1-3-5.200"/><path d="M12 9a3 3 0 1 1-1.500-2.600"/></svg>
<svg style="left:1554px;top:1046px" width="20" height="20" viewBox="0 0 20 20"><rect width="18" height="18" rx="2" fill="#0a1560"/><circle cx="9" cy="9" r="6.800" fill="#fff"/><path d="M3.500 9l3-2.200v1.500h5V6.800l3 2.200-3 2.200V9.700h-5v1.500z" fill="#0a1560"/><circle cx="15" cy="15" r="3.500" fill="#49b53a"/><path d="M13 15h4" stroke="#fff" stroke-width="1.200"/></svg>
<svg style="left:1585px;top:1048px" width="19" height="14" viewBox="0 0 19 14" fill="none" stroke="#fff" stroke-width="1.400"><path d="M1 5a12 12 0 0 1 17 0M3.500 7.800a8.500 8.500 0 0 1 12 0M6 10.500a5 5 0 0 1 7 0"/><circle cx="9.500" cy="12.500" r="1" fill="#fff" stroke="none"/></svg>
<svg style="left:1610px;top:1048px" width="18" height="16" viewBox="0 0 18 16" fill="none" stroke="#fff" stroke-width="1.200"><path d="M1 6h3l4-3.500v11L4 10H1z"/><path d="M10.500 5.500a3.500 3.500 0 0 1 0 5M12.700 3.500a6 6 0 0 1 0 9M15 1.500a9 9 0 0 1 0 13"/></svg>
<div class="t" style="left:1639px;width:62px;text-align:right;top:1040px;color:#fff;font-size:11.5px">12:15</div>
<div class="t" style="left:1639px;width:62px;text-align:right;top:1056px;color:#fff;font-size:11.5px">08.01.2025</div>
</body></html>
